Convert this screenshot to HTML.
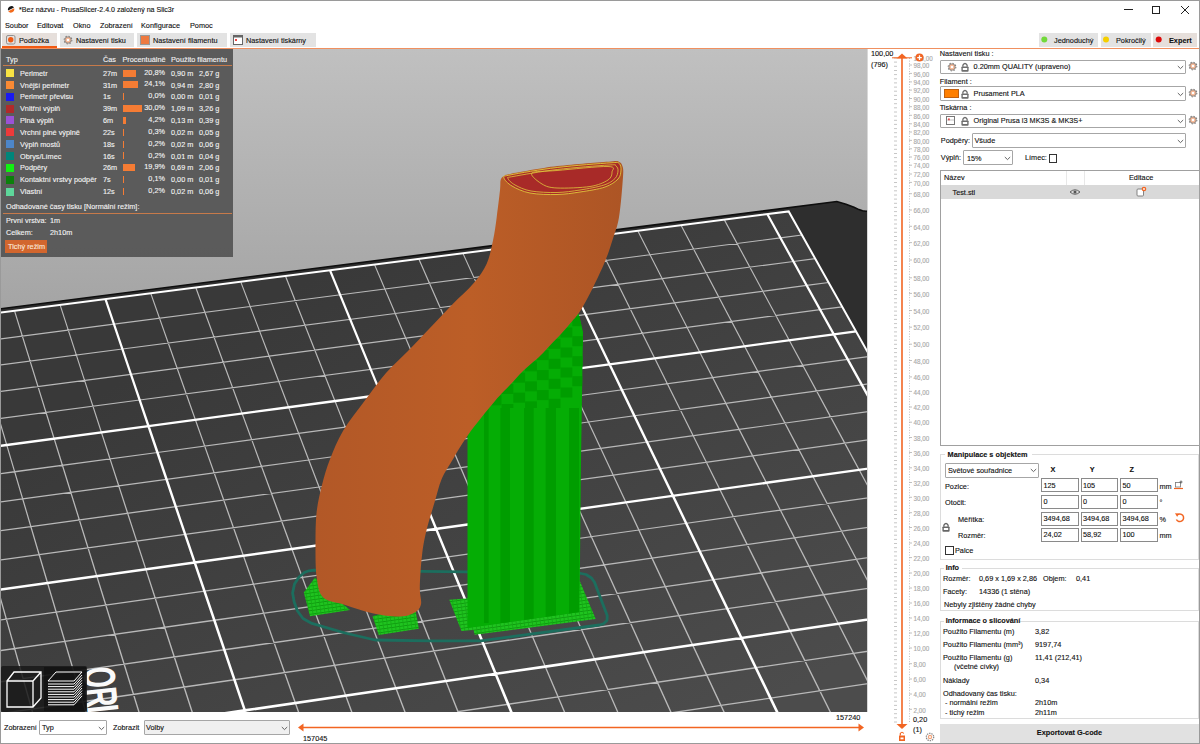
<!DOCTYPE html><html><head><meta charset="utf-8"><title>PrusaSlicer</title><style>
*{margin:0;padding:0;box-sizing:border-box}
html,body{width:1200px;height:744px;overflow:hidden;background:#fff;font-family:"Liberation Sans",sans-serif}
.t{position:absolute;white-space:nowrap;line-height:1.2;-webkit-text-stroke:0.12px currentColor}
.b{position:absolute}
svg{position:absolute}
</style></head><body>
<div class="b" style="left:0px;top:0px;width:1200px;height:744px;background:#fff;border:1px solid #9a9a9a;"></div>
<svg style="left:7px;top:5px" width="8" height="9" viewBox="0 0 8 9"><path d="M1,5.6 A3.4,3.6 0 0 1 7,2.6 Z" fill="#161616"/><path d="M1.2,6.2 L7.2,3.2 A3.4,3.6 0 0 1 1.2,6.2 Z" fill="#f26a1b"/></svg>
<div class="t " style="left:19px;top:6.3px;font-size:7.05px;color:#111;font-weight:400;">*Bez názvu - PrusaSlicer-2.4.0 založený na Slic3r</div>
<div class="b" style="left:1124px;top:9px;width:9px;height:1px;background:#222;"></div>
<div class="b" style="left:1152px;top:6px;width:8px;height:8px;background:none;border:1px solid #222;"></div>
<svg style="left:1180px;top:5px" width="10" height="10"><path d="M1,1 L9,9 M9,1 L1,9" stroke="#222" stroke-width="1"/></svg>
<div class="t " style="left:5px;top:22.1px;font-size:7.3px;color:#111;font-weight:400;">Soubor</div>
<div class="t " style="left:37px;top:22.1px;font-size:7.3px;color:#111;font-weight:400;">Editovat</div>
<div class="t " style="left:73px;top:22.1px;font-size:7.3px;color:#111;font-weight:400;">Okno</div>
<div class="t " style="left:100px;top:22.1px;font-size:7.3px;color:#111;font-weight:400;">Zobrazení</div>
<div class="t " style="left:141px;top:22.1px;font-size:7.3px;color:#111;font-weight:400;">Konfigurace</div>
<div class="t " style="left:190px;top:22.1px;font-size:7.3px;color:#111;font-weight:400;">Pomoc</div>
<div class="b" style="left:2px;top:33px;width:55px;height:13px;background:#e6dfdb;"></div>
<div class="b" style="left:2px;top:46px;width:55px;height:2px;background:#f25a12;"></div>
<div class="b" style="left:60px;top:33px;width:74px;height:14px;background:#e3e3e3;"></div>
<div class="b" style="left:137px;top:33px;width:90px;height:14px;background:#e3e3e3;"></div>
<div class="b" style="left:230px;top:33px;width:86px;height:14px;background:#e3e3e3;"></div>
<div class="b" style="left:1px;top:48px;width:1198px;height:1px;background:#f09060;"></div>
<svg style="left:6px;top:35px" width="10" height="10"><rect x="0.5" y="0.5" width="8.5" height="8.5" rx="1.5" fill="none" stroke="#888" stroke-width="0.9"/><circle cx="4.75" cy="4.75" r="2.7" fill="#f05a14"/></svg>
<div class="t " style="left:19px;top:36.6px;font-size:7.3px;color:#111;font-weight:400;">Podložka</div>
<svg style="left:63px;top:35px" width="10" height="10"><circle cx="5" cy="5" r="3.85" fill="none" stroke="#808080" stroke-width="1.1" stroke-dasharray="1.4 1.62"/><circle cx="5" cy="5" r="3.2" fill="#f4b592" stroke="#808080" stroke-width="0.8"/><circle cx="5" cy="5" r="1.3" fill="#fff"/></svg>
<div class="t " style="left:76px;top:36.6px;font-size:7.3px;color:#111;font-weight:400;">Nastavení tisku</div>
<svg style="left:140px;top:35px" width="10" height="10"><rect x="0.5" y="0.5" width="9" height="9" fill="#ee7a40" stroke="#999"/></svg>
<div class="t " style="left:153px;top:36.6px;font-size:7.3px;color:#111;font-weight:400;">Nastavení filamentu</div>
<svg style="left:233px;top:35px" width="10" height="10"><rect x="0.5" y="0.5" width="9" height="9" fill="#fff" stroke="#666"/><rect x="0.5" y="0.5" width="9" height="2" fill="#666"/><rect x="2" y="4" width="2" height="2" fill="#e44"/></svg>
<div class="t " style="left:246px;top:36.6px;font-size:7.3px;color:#111;font-weight:400;">Nastavení tiskárny</div>
<div class="b" style="left:1039px;top:33px;width:59px;height:14px;background:#e3e3e3;"></div>
<div class="b" style="left:1101px;top:33px;width:50px;height:14px;background:#e3e3e3;"></div>
<div class="b" style="left:1153px;top:33px;width:44px;height:14px;background:#e6dfdb;"></div>
<svg style="left:1040px;top:35px" width="160" height="10"><circle cx="4.3" cy="4.6" r="3" fill="#72d93a"/><circle cx="66" cy="4.6" r="3" fill="#f5cf00"/><circle cx="118.7" cy="4.6" r="3" fill="#dd0a0a"/></svg>
<div class="t " style="left:1054px;top:36.6px;font-size:7.3px;color:#111;font-weight:400;">Jednoduchý</div>
<div class="t " style="left:1116px;top:36.6px;font-size:7.3px;color:#111;font-weight:400;">Pokročilý</div>
<div class="t " style="left:1169px;top:36.6px;font-size:7.3px;color:#111;font-weight:700;">Expert</div>
<svg width="867" height="663" viewBox="1 49 867 663" style="position:absolute;left:1px;top:49px">
<defs><linearGradient id="bg" x1="0" y1="0" x2="0" y2="1"><stop offset="0" stop-color="#c0c0c0"/><stop offset="1" stop-color="#7a7a7a"/></linearGradient>
<linearGradient id="bedg" gradientUnits="userSpaceOnUse" x1="420" y1="220" x2="700" y2="740"><stop offset="0" stop-color="#393939"/><stop offset="1" stop-color="#4c4c4c"/></linearGradient>
<linearGradient id="org" x1="0" y1="0" x2="1" y2="0"><stop offset="0" stop-color="#b25827"/><stop offset="0.5" stop-color="#bc5e27"/><stop offset="1" stop-color="#ad5525"/></linearGradient>
</defs>
<rect x="1" y="49" width="867" height="663" fill="url(#bg)"/>
<path d="M-286.0,1357.2 L-451.1,366.7 L836.8,201.5 L846.0,204.3 L854.0,207.2 L859.0,209.6 L862.5,210.8 L866.0,211.2 L869.0,211.0 L869.0,720.0Z" fill="#2e2e2e" stroke="#0e0e0e" stroke-width="1.6"/>
<path d="M-450.4,371.1 L789.0,211.8 L1283.2,1093.2 L-286.0,1357.2Z" fill="url(#bedg)"/>
<path fill="#b9b9b9" d="M-451.0,371.2 L-438.0,449.2 L-436.8,449.0 L-449.8,371.0Z M-438.0,449.2 L-424.4,531.0 L-423.1,530.8 L-436.8,449.0Z M-424.4,531.0 L-410.1,616.7 L-408.8,616.5 L-423.1,530.8Z M-410.1,616.7 L-395.1,706.7 L-393.8,706.5 L-408.8,616.5Z M-395.1,706.7 L-379.4,801.3 L-378.0,801.1 L-393.8,706.5Z M-379.4,801.3 L-362.8,900.9 L-361.4,900.7 L-378.0,801.1Z M-362.8,900.9 L-345.4,1005.8 L-343.9,1005.6 L-361.4,900.7Z M-345.4,1005.8 L-326.9,1116.5 L-325.4,1116.2 L-343.9,1005.6Z M-326.9,1116.5 L-307.5,1233.5 L-305.8,1233.2 L-325.4,1116.2Z M-307.5,1233.5 L-286.9,1357.3 L-285.2,1357.1 L-305.8,1233.2Z M-403.7,365.1 L-389.6,442.9 L-388.4,442.7 L-402.5,364.9Z M-389.6,442.9 L-374.9,524.3 L-373.7,524.1 L-388.4,442.7Z M-374.9,524.3 L-359.5,609.7 L-358.2,609.5 L-373.7,524.1Z M-359.5,609.7 L-343.3,699.4 L-341.9,699.1 L-358.2,609.5Z M-343.3,699.4 L-326.2,793.6 L-324.8,793.4 L-341.9,699.1Z M-326.2,793.6 L-308.3,892.7 L-306.9,892.5 L-324.8,793.4Z M-308.3,892.7 L-289.4,997.2 L-287.9,996.9 L-306.9,892.5Z M-289.4,997.2 L-269.5,1107.4 L-268.0,1107.1 L-287.9,996.9Z M-269.5,1107.4 L-248.5,1223.9 L-246.8,1223.6 L-268.0,1107.1Z M-248.5,1223.9 L-226.2,1347.1 L-224.5,1346.8 L-246.8,1223.6Z M-309.6,353.0 L-293.5,430.2 L-292.3,430.0 L-308.5,352.8Z M-293.5,430.2 L-276.5,511.1 L-275.3,510.8 L-292.3,430.0Z M-276.5,511.1 L-258.8,595.8 L-257.5,595.6 L-275.3,510.8Z M-258.8,595.8 L-240.2,684.8 L-238.8,684.5 L-257.5,595.6Z M-240.2,684.8 L-220.6,778.2 L-219.2,777.9 L-238.8,684.5Z M-220.6,778.2 L-200.0,876.5 L-198.6,876.2 L-219.2,777.9Z M-200.0,876.5 L-178.3,980.1 L-176.8,979.8 L-198.6,876.2Z M-178.3,980.1 L-155.4,1089.4 L-153.9,1089.0 L-176.8,979.8Z M-155.4,1089.4 L-131.3,1204.8 L-129.6,1204.4 L-153.9,1089.0Z M-131.3,1204.8 L-105.7,1326.9 L-104.0,1326.5 L-129.6,1204.4Z M-262.9,347.0 L-245.7,423.9 L-244.5,423.7 L-261.7,346.8Z M-245.7,423.9 L-227.6,504.5 L-226.4,504.2 L-244.5,423.7Z M-227.6,504.5 L-208.7,588.9 L-207.5,588.6 L-226.4,504.2Z M-208.7,588.9 L-188.9,677.5 L-187.6,677.2 L-207.5,588.6Z M-188.9,677.5 L-168.1,770.6 L-166.7,770.3 L-187.6,677.2Z M-168.1,770.6 L-146.2,868.5 L-144.8,868.2 L-166.7,770.3Z M-146.2,868.5 L-123.1,971.6 L-121.6,971.3 L-144.8,868.2Z M-123.1,971.6 L-98.8,1080.4 L-97.2,1080.0 L-121.6,971.3Z M-98.8,1080.4 L-73.1,1195.3 L-71.5,1194.9 L-97.2,1080.0Z M-73.1,1195.3 L-45.9,1316.8 L-44.2,1316.5 L-71.5,1194.9Z M-216.3,341.0 L-198.0,417.7 L-196.9,417.4 L-215.2,340.8Z M-198.0,417.7 L-178.9,497.9 L-177.7,497.6 L-196.9,417.4Z M-178.9,497.9 L-158.9,582.0 L-157.6,581.7 L-177.7,497.6Z M-158.9,582.0 L-137.9,670.3 L-136.6,670.0 L-157.6,581.7Z M-137.9,670.3 L-115.8,763.0 L-114.5,762.7 L-136.6,670.0Z M-115.8,763.0 L-92.6,860.5 L-91.2,860.1 L-114.5,762.7Z M-92.6,860.5 L-68.1,963.2 L-66.7,962.8 L-91.2,860.1Z M-68.1,963.2 L-42.4,1071.5 L-40.8,1071.1 L-66.7,962.8Z M-42.4,1071.5 L-15.1,1185.8 L-13.5,1185.5 L-40.8,1071.1Z M-15.1,1185.8 L13.7,1306.8 L15.3,1306.4 L-13.5,1185.5Z M-169.9,335.1 L-150.6,411.5 L-149.4,411.2 L-168.7,334.8Z M-150.6,411.5 L-130.4,491.4 L-129.2,491.1 L-149.4,411.2Z M-130.4,491.4 L-109.2,575.2 L-108.0,574.9 L-129.2,491.1Z M-109.2,575.2 L-87.1,663.1 L-85.8,662.7 L-108.0,574.9Z M-87.1,663.1 L-63.8,755.4 L-62.4,755.1 L-85.8,662.7Z M-63.8,755.4 L-39.2,852.5 L-37.8,852.1 L-62.4,755.1Z M-39.2,852.5 L-13.4,954.7 L-12.0,954.4 L-37.8,852.1Z M-13.4,954.7 L13.8,1062.6 L15.3,1062.2 L-12.0,954.4Z M13.8,1062.6 L42.5,1176.4 L44.1,1176.0 L15.3,1062.2Z M42.5,1176.4 L72.9,1296.9 L74.6,1296.5 L44.1,1176.0Z M-77.5,323.2 L-56.2,399.0 L-55.1,398.7 L-76.4,322.9Z M-56.2,399.0 L-33.9,478.4 L-32.7,478.1 L-55.1,398.7Z M-33.9,478.4 L-10.5,561.5 L-9.3,561.2 L-32.7,478.1Z M-10.5,561.5 L14.0,648.7 L15.3,648.4 L-9.3,561.2Z M14.0,648.7 L39.7,740.3 L41.1,740.0 L15.3,648.4Z M39.7,740.3 L66.8,836.6 L68.2,836.2 L41.1,740.0Z M66.8,836.6 L95.3,938.0 L96.7,937.6 L68.2,836.2Z M95.3,938.0 L125.4,1044.9 L126.8,1044.5 L96.7,937.6Z M125.4,1044.9 L157.1,1157.8 L158.6,1157.3 L126.8,1044.5Z M157.1,1157.8 L190.6,1277.1 L192.2,1276.6 L158.6,1157.3Z M-31.6,317.3 L-9.3,392.9 L-8.2,392.5 L-30.5,317.0Z M-9.3,392.9 L14.1,471.9 L15.2,471.6 L-8.2,392.5Z M14.1,471.9 L38.5,554.8 L39.8,554.4 L15.2,471.6Z M38.5,554.8 L64.2,641.6 L65.5,641.3 L39.8,554.4Z M64.2,641.6 L91.1,732.8 L92.5,732.5 L65.5,641.3Z M91.1,732.8 L119.5,828.8 L120.9,828.3 L92.5,732.5Z M119.5,828.8 L149.3,929.7 L150.7,929.3 L120.9,828.3Z M149.3,929.7 L180.8,1036.1 L182.2,1035.7 L150.7,929.3Z M180.8,1036.1 L214.0,1148.5 L215.5,1148.0 L182.2,1035.7Z M214.0,1148.5 L249.0,1267.3 L250.7,1266.8 L215.5,1148.0Z M14.1,311.5 L37.4,386.7 L38.6,386.4 L15.2,311.1Z M37.4,386.7 L61.8,465.5 L63.0,465.1 L38.6,386.4Z M61.8,465.5 L87.4,548.0 L88.6,547.6 L63.0,465.1Z M87.4,548.0 L114.2,634.5 L115.5,634.1 L88.6,547.6Z M114.2,634.5 L142.4,725.4 L143.7,725.0 L115.5,634.1Z M142.4,725.4 L171.9,820.9 L173.3,820.5 L143.7,725.0Z M171.9,820.9 L203.1,921.4 L204.5,921.0 L173.3,820.5Z M203.1,921.4 L235.9,1027.4 L237.4,1027.0 L204.5,921.0Z M235.9,1027.4 L270.6,1139.3 L272.1,1138.8 L237.4,1027.0Z M270.6,1139.3 L307.2,1257.5 L308.8,1257.0 L272.1,1138.8Z M59.7,305.6 L84.0,380.6 L85.1,380.3 L60.8,305.3Z M84.0,380.6 L109.4,459.1 L110.6,458.7 L85.1,380.3Z M109.4,459.1 L136.1,541.3 L137.3,540.9 L110.6,458.7Z M136.1,541.3 L164.0,627.5 L165.3,627.1 L137.3,540.9Z M164.0,627.5 L193.4,718.0 L194.7,717.5 L165.3,627.1Z M193.4,718.0 L224.2,813.1 L225.5,812.7 L194.7,717.5Z M224.2,813.1 L256.6,913.2 L258.0,912.8 L225.5,812.7Z M256.6,913.2 L290.8,1018.7 L292.3,1018.2 L258.0,912.8Z M290.8,1018.7 L326.9,1130.1 L328.5,1129.6 L292.3,1018.2Z M326.9,1130.1 L365.1,1247.8 L366.7,1247.3 L328.5,1129.6Z M150.4,294.0 L176.6,368.4 L177.7,368.0 L151.4,293.6Z M176.6,368.4 L204.1,446.3 L205.3,445.9 L177.7,368.0Z M204.1,446.3 L232.9,527.9 L234.1,527.5 L205.3,445.9Z M232.9,527.9 L263.1,613.4 L264.3,613.0 L234.1,527.5Z M263.1,613.4 L294.7,703.2 L296.0,702.8 L264.3,613.0Z M294.7,703.2 L328.0,797.6 L329.4,797.1 L296.0,702.8Z M328.0,797.6 L363.0,896.8 L364.4,896.4 L329.4,797.1Z M363.0,896.8 L399.9,1001.5 L401.4,1000.9 L364.4,896.4Z M399.9,1001.5 L438.9,1111.8 L440.4,1111.3 L401.4,1000.9Z M438.9,1111.8 L480.0,1228.5 L481.6,1227.9 L440.4,1111.3Z M195.4,288.2 L222.7,362.4 L223.8,362.0 L196.5,287.8Z M222.7,362.4 L251.2,440.0 L252.3,439.6 L223.8,362.0Z M251.2,440.0 L281.0,521.3 L282.2,520.8 L252.3,439.6Z M281.0,521.3 L312.3,606.5 L313.5,606.0 L282.2,520.8Z M312.3,606.5 L345.1,695.9 L346.4,695.4 L313.5,606.0Z M345.1,695.9 L379.6,789.8 L380.9,789.4 L346.4,695.4Z M379.6,789.8 L415.9,888.7 L417.3,888.2 L380.9,789.4Z M415.9,888.7 L454.1,992.9 L455.6,992.3 L417.3,888.2Z M454.1,992.9 L494.5,1102.8 L496.0,1102.2 L455.6,992.3Z M494.5,1102.8 L537.1,1218.9 L538.7,1218.3 L496.0,1102.2Z M240.4,282.4 L268.6,356.4 L269.7,355.9 L241.4,282.0Z M268.6,356.4 L298.1,433.7 L299.2,433.2 L269.7,355.9Z M298.1,433.7 L328.9,514.6 L330.1,514.2 L299.2,433.2Z M328.9,514.6 L361.3,599.5 L362.5,599.0 L330.1,514.2Z M361.3,599.5 L395.3,688.6 L396.6,688.1 L362.5,599.0Z M395.3,688.6 L431.0,782.2 L432.3,781.7 L396.6,688.1Z M431.0,782.2 L468.5,880.6 L469.9,880.1 L432.3,781.7Z M468.5,880.6 L508.1,984.3 L509.5,983.8 L469.9,880.1Z M508.1,984.3 L549.8,1093.7 L551.3,1093.2 L509.5,983.8Z M549.8,1093.7 L593.9,1209.3 L595.5,1208.7 L551.3,1093.2Z M285.1,276.7 L314.3,350.4 L315.4,349.9 L286.2,276.3Z M314.3,350.4 L344.8,427.4 L345.9,426.9 L315.4,349.9Z M344.8,427.4 L376.7,508.0 L377.9,507.6 L345.9,426.9Z M376.7,508.0 L410.1,592.6 L411.4,592.1 L377.9,507.6Z M410.1,592.6 L445.2,681.3 L446.5,680.8 L411.4,592.1Z M445.2,681.3 L482.1,774.5 L483.4,774.0 L446.5,680.8Z M482.1,774.5 L520.9,872.6 L522.3,872.0 L483.4,774.0Z M520.9,872.6 L561.8,975.8 L563.2,975.3 L522.3,872.0Z M561.8,975.8 L604.9,1084.8 L606.4,1084.2 L563.2,975.3Z M604.9,1084.8 L650.5,1199.8 L652.0,1199.2 L606.4,1084.2Z M374.2,265.3 L405.2,338.4 L406.3,337.9 L375.2,264.8Z M405.2,338.4 L437.6,414.9 L438.8,414.4 L406.3,337.9Z M437.6,414.9 L471.6,494.9 L472.8,494.4 L438.8,414.4Z M471.6,494.9 L507.2,578.8 L508.4,578.3 L472.8,494.4Z M507.2,578.8 L544.6,666.8 L545.8,666.3 L508.4,578.3Z M544.6,666.8 L583.8,759.3 L585.1,758.7 L545.8,666.3Z M583.8,759.3 L625.1,856.5 L626.4,856.0 L585.1,758.7Z M625.1,856.5 L668.5,958.9 L669.9,958.3 L626.4,856.0Z M668.5,958.9 L714.4,1066.9 L715.8,1066.3 L669.9,958.3Z M714.4,1066.9 L762.8,1181.0 L764.3,1180.3 L715.8,1066.3Z M418.4,259.6 L450.4,332.5 L451.5,332.0 L419.5,259.1Z M450.4,332.5 L483.8,408.6 L484.9,408.2 L451.5,332.0Z M483.8,408.6 L518.8,488.4 L520.0,487.9 L484.9,408.2Z M518.8,488.4 L555.5,572.0 L556.7,571.4 L520.0,487.9Z M555.5,572.0 L594.0,659.6 L595.2,659.1 L556.7,571.4Z M594.0,659.6 L634.4,751.7 L635.6,751.2 L595.2,659.1Z M634.4,751.7 L676.8,848.6 L678.2,848.0 L635.6,751.2Z M676.8,848.6 L721.6,950.5 L723.0,949.9 L678.2,848.0Z M721.6,950.5 L768.7,1058.1 L770.2,1057.4 L723.0,949.9Z M768.7,1058.1 L818.5,1171.6 L820.1,1170.9 L770.2,1057.4Z M462.6,253.9 L495.4,326.5 L496.5,326.0 L463.6,253.5Z M495.4,326.5 L529.8,402.4 L530.9,401.9 L496.5,326.0Z M529.8,402.4 L565.8,481.9 L567.0,481.4 L530.9,401.9Z M565.8,481.9 L603.6,565.2 L604.7,564.6 L567.0,481.4Z M603.6,565.2 L643.1,652.5 L644.4,651.9 L604.7,564.6Z M643.1,652.5 L684.7,744.2 L685.9,743.6 L644.4,651.9Z M684.7,744.2 L728.4,840.6 L729.7,840.0 L685.9,743.6Z M728.4,840.6 L774.4,942.2 L775.7,941.6 L729.7,840.0Z M774.4,942.2 L822.9,1049.2 L824.3,1048.6 L775.7,941.6Z M822.9,1049.2 L874.1,1162.3 L875.6,1161.6 L824.3,1048.6Z M506.5,248.3 L540.3,320.6 L541.4,320.1 L507.5,247.8Z M540.3,320.6 L575.7,396.3 L576.8,395.8 L541.4,320.1Z M575.7,396.3 L612.7,475.4 L613.8,474.9 L576.8,395.8Z M612.7,475.4 L651.4,558.4 L652.6,557.8 L613.8,474.9Z M651.4,558.4 L692.1,645.4 L693.3,644.8 L652.6,557.8Z M692.1,645.4 L734.8,736.7 L736.1,736.1 L693.3,644.8Z M734.8,736.7 L779.7,832.8 L781.0,832.1 L736.1,736.1Z M779.7,832.8 L826.9,933.9 L828.3,933.2 L781.0,832.1Z M826.9,933.9 L876.7,1040.4 L878.2,1039.8 L828.3,933.2Z M876.7,1040.4 L929.3,1153.0 L930.8,1152.3 L878.2,1039.8Z M594.0,237.1 L629.6,308.9 L630.7,308.4 L595.0,236.6Z M629.6,308.9 L666.8,384.0 L667.9,383.4 L630.7,308.4Z M666.8,384.0 L705.8,462.6 L706.9,462.0 L667.9,383.4Z M705.8,462.6 L746.6,544.9 L747.8,544.3 L706.9,462.0Z M746.6,544.9 L789.4,631.2 L790.7,630.6 L747.8,544.3Z M789.4,631.2 L834.4,721.8 L835.6,721.2 L790.7,630.6Z M834.4,721.8 L881.6,817.1 L882.9,816.4 L835.6,721.2Z M881.6,817.1 L931.4,917.3 L932.7,916.7 L882.9,816.4Z M931.4,917.3 L983.8,1023.0 L985.2,1022.3 L932.7,916.7Z M983.8,1023.0 L1039.1,1134.5 L1040.6,1133.8 L985.2,1022.3Z M637.5,231.5 L674.0,303.1 L675.0,302.5 L638.5,231.0Z M674.0,303.1 L712.2,377.9 L713.2,377.3 L675.0,302.5Z M712.2,377.9 L752.1,456.2 L753.2,455.6 L713.2,377.3Z M752.1,456.2 L794.0,538.2 L795.1,537.6 L753.2,455.6Z M794.0,538.2 L837.8,624.1 L839.0,623.5 L795.1,537.6Z M837.8,624.1 L883.9,714.4 L885.1,713.8 L839.0,623.5Z M883.9,714.4 L932.3,809.3 L933.6,808.6 L885.1,713.8Z M932.3,809.3 L983.3,909.1 L984.6,908.4 L933.6,808.6Z M983.3,909.1 L1036.9,1014.3 L1038.3,1013.6 L984.6,908.4Z M1036.9,1014.3 L1093.6,1125.4 L1095.1,1124.6 L1038.3,1013.6Z M680.8,225.9 L718.2,297.2 L719.3,296.7 L681.8,225.4Z M718.2,297.2 L757.3,371.8 L758.4,371.2 L719.3,296.7Z M757.3,371.8 L798.2,449.8 L799.4,449.2 L758.4,371.2Z M798.2,449.8 L841.1,531.5 L842.2,530.9 L799.4,449.2Z M841.1,531.5 L886.0,617.1 L887.2,616.5 L842.2,530.9Z M886.0,617.1 L933.2,707.0 L934.4,706.4 L887.2,616.5Z M933.2,707.0 L982.8,801.5 L984.0,800.8 L934.4,706.4Z M982.8,801.5 L1034.9,900.9 L1036.2,900.2 L984.0,800.8Z M1034.9,900.9 L1089.9,1005.7 L1091.3,1005.0 L1036.2,900.2Z M1089.9,1005.7 L1147.9,1116.2 L1149.3,1115.5 L1091.3,1005.0Z M724.0,220.4 L762.3,291.5 L763.3,290.9 L725.0,219.8Z M762.3,291.5 L802.3,365.7 L803.4,365.2 L763.3,290.9Z M802.3,365.7 L844.2,443.4 L845.3,442.8 L803.4,365.2Z M844.2,443.4 L888.1,524.8 L889.2,524.2 L845.3,442.8Z M888.1,524.8 L934.0,610.1 L935.2,609.5 L889.2,524.2Z M934.0,610.1 L982.3,699.7 L983.5,699.0 L935.2,609.5Z M982.3,699.7 L1033.0,793.8 L1034.3,793.1 L983.5,699.0Z M1033.0,793.8 L1086.4,892.8 L1087.7,892.1 L1034.3,793.1Z M1086.4,892.8 L1142.6,997.1 L1143.9,996.4 L1087.7,892.1Z M1142.6,997.1 L1201.9,1107.2 L1203.3,1106.4 L1143.9,996.4Z M-446.0,397.3 L-303.7,378.8 L-303.8,377.7 L-446.2,396.1Z M-303.7,378.8 L-162.9,360.6 L-163.0,359.4 L-303.8,377.7Z M-162.9,360.6 L-23.7,342.6 L-23.8,341.4 L-163.0,359.4Z M-23.7,342.6 L114.0,324.7 L113.9,323.6 L-23.8,341.4Z M114.0,324.7 L250.2,307.1 L250.1,305.9 L113.9,323.6Z M250.2,307.1 L385.0,289.6 L384.8,288.5 L250.1,305.9Z M385.0,289.6 L518.2,272.4 L518.1,271.2 L384.8,288.5Z M518.2,272.4 L650.0,255.3 L649.9,254.2 L518.1,271.2Z M650.0,255.3 L780.5,238.4 L780.3,237.3 L649.9,254.2Z M780.5,238.4 L802.1,235.6 L801.9,234.5 L780.3,237.3Z M-441.7,423.3 L-298.3,404.6 L-298.4,403.4 L-441.9,422.1Z M-298.3,404.6 L-156.5,386.1 L-156.6,384.9 L-298.4,403.4Z M-156.5,386.1 L-16.2,367.7 L-16.4,366.6 L-156.6,384.9Z M-16.2,367.7 L122.5,349.6 L122.3,348.5 L-16.4,366.6Z M122.5,349.6 L259.6,331.7 L259.5,330.6 L122.3,348.5Z M259.6,331.7 L395.3,314.0 L395.2,312.9 L259.5,330.6Z M395.3,314.0 L529.5,296.5 L529.3,295.3 L395.2,312.9Z M529.5,296.5 L662.2,279.2 L662.1,278.0 L529.3,295.3Z M662.2,279.2 L793.5,262.0 L793.4,260.9 L662.1,278.0Z M793.5,262.0 L815.3,259.2 L815.1,258.0 L793.4,260.9Z M-437.3,449.7 L-292.8,430.7 L-293.0,429.5 L-437.5,448.5Z M-292.8,430.7 L-149.9,411.9 L-150.1,410.7 L-293.0,429.5Z M-149.9,411.9 L-8.7,393.3 L-8.8,392.1 L-150.1,410.7Z M-8.7,393.3 L131.0,374.9 L130.9,373.7 L-8.8,392.1Z M131.0,374.9 L269.2,356.7 L269.0,355.6 L130.9,373.7Z M269.2,356.7 L405.8,338.8 L405.7,337.6 L269.0,355.6Z M405.8,338.8 L540.9,321.0 L540.8,319.8 L405.7,337.6Z M540.9,321.0 L674.6,303.4 L674.4,302.2 L540.8,319.8Z M674.6,303.4 L806.8,286.0 L806.6,284.8 L674.4,302.2Z M806.8,286.0 L828.7,283.1 L828.5,281.9 L806.6,284.8Z M-432.8,476.6 L-287.2,457.2 L-287.4,456.0 L-433.0,475.3Z M-287.2,457.2 L-143.3,438.1 L-143.4,436.9 L-287.4,456.0Z M-143.3,438.1 L-1.0,419.3 L-1.1,418.1 L-143.4,436.9Z M-1.0,419.3 L139.7,400.6 L139.6,399.4 L-1.1,418.1Z M139.7,400.6 L278.9,382.1 L278.7,380.9 L139.6,399.4Z M278.9,382.1 L416.5,363.9 L416.3,362.7 L278.7,380.9Z M416.5,363.9 L552.6,345.8 L552.4,344.6 L416.3,362.7Z M552.6,345.8 L687.1,327.9 L687.0,326.8 L552.4,344.6Z M687.1,327.9 L820.2,310.3 L820.1,309.1 L687.0,326.8Z M820.2,310.3 L842.3,307.4 L842.1,306.2 L820.1,309.1Z M-423.7,531.5 L-275.8,511.6 L-276.0,510.3 L-423.8,530.3Z M-275.8,511.6 L-129.7,491.9 L-129.9,490.6 L-276.0,510.3Z M-129.7,491.9 L14.7,472.4 L14.6,471.1 L-129.9,490.6Z M14.7,472.4 L157.5,453.1 L157.4,451.9 L14.6,471.1Z M157.5,453.1 L298.7,434.1 L298.5,432.8 L157.4,451.9Z M298.7,434.1 L438.3,415.2 L438.1,414.0 L298.5,432.8Z M438.3,415.2 L576.3,396.6 L576.1,395.4 L438.1,414.0Z M576.3,396.6 L712.8,378.2 L712.6,377.0 L576.1,395.4Z M712.8,378.2 L847.8,360.0 L847.6,358.8 L712.6,377.0Z M847.8,360.0 L870.1,357.0 L869.9,355.8 L847.6,358.8Z M-419.0,559.6 L-270.0,539.4 L-270.2,538.1 L-419.1,558.4Z M-270.0,539.4 L-122.8,519.4 L-122.9,518.1 L-270.2,538.1Z M-122.8,519.4 L22.8,499.6 L22.6,498.3 L-122.9,518.1Z M22.8,499.6 L166.6,480.0 L166.5,478.8 L22.6,498.3Z M166.6,480.0 L308.8,460.6 L308.7,459.4 L166.5,478.8Z M308.8,460.6 L449.4,441.5 L449.3,440.3 L308.7,459.4Z M449.4,441.5 L588.5,422.6 L588.3,421.4 L449.3,440.3Z M588.5,422.6 L725.9,403.9 L725.7,402.7 L588.3,421.4Z M725.9,403.9 L861.8,385.4 L861.7,384.2 L725.7,402.7Z M861.8,385.4 L884.3,382.4 L884.2,381.1 L861.7,384.2Z M-414.2,588.2 L-264.1,567.6 L-264.3,566.4 L-414.4,587.0Z M-264.1,567.6 L-115.7,547.3 L-115.9,546.0 L-264.3,566.4Z M-115.7,547.3 L30.9,527.2 L30.8,525.9 L-115.9,546.0Z M30.9,527.2 L175.9,507.3 L175.7,506.0 L30.8,525.9Z M175.9,507.3 L319.1,487.6 L319.0,486.4 L175.7,506.0Z M319.1,487.6 L460.8,468.2 L460.6,467.0 L319.0,486.4Z M460.8,468.2 L600.8,449.0 L600.6,447.8 L460.6,467.0Z M600.8,449.0 L739.2,430.0 L739.1,428.8 L600.6,447.8Z M739.2,430.0 L876.1,411.2 L875.9,410.0 L739.1,428.8Z M876.1,411.2 L898.8,408.1 L898.6,406.9 L875.9,410.0Z M-409.4,617.3 L-258.1,596.3 L-258.2,595.1 L-409.5,616.0Z M-258.1,596.3 L-108.5,575.7 L-108.7,574.4 L-258.2,595.1Z M-108.5,575.7 L39.2,555.2 L39.1,553.9 L-108.7,574.4Z M39.2,555.2 L185.3,535.0 L185.1,533.7 L39.1,553.9Z M185.3,535.0 L329.6,515.0 L329.4,513.8 L185.1,533.7Z M329.6,515.0 L472.3,495.3 L472.1,494.0 L329.4,513.8Z M472.3,495.3 L613.3,475.8 L613.2,474.5 L472.1,494.0Z M613.3,475.8 L752.8,456.5 L752.6,455.3 L613.2,474.5Z M752.8,456.5 L890.6,437.4 L890.4,436.2 L752.6,455.3Z M890.6,437.4 L913.4,434.3 L913.3,433.0 L890.4,436.2Z M-399.4,676.8 L-245.7,655.2 L-245.9,653.8 L-399.6,675.5Z M-245.7,655.2 L-93.8,633.8 L-94.0,632.5 L-245.9,653.8Z M-93.8,633.8 L56.2,612.7 L56.0,611.4 L-94.0,632.5Z M56.2,612.7 L204.5,591.8 L204.3,590.5 L56.0,611.4Z M204.5,591.8 L351.0,571.2 L350.9,569.9 L204.3,590.5Z M351.0,571.2 L495.9,550.8 L495.7,549.5 L350.9,569.9Z M495.9,550.8 L639.0,530.6 L638.8,529.4 L495.7,549.5Z M639.0,530.6 L780.5,510.7 L780.3,509.5 L638.8,529.4Z M780.5,510.7 L920.3,491.1 L920.1,489.8 L780.3,509.5Z M920.3,491.1 L943.4,487.8 L943.3,486.5 L920.1,489.8Z M-394.4,707.3 L-239.4,685.3 L-239.6,684.0 L-394.5,706.0Z M-239.4,685.3 L-86.3,663.6 L-86.5,662.2 L-239.6,684.0Z M-86.3,663.6 L64.9,642.1 L64.7,640.8 L-86.5,662.2Z M64.9,642.1 L214.4,620.9 L214.2,619.6 L64.7,640.8Z M214.4,620.9 L362.0,599.9 L361.8,598.6 L214.2,619.6Z M362.0,599.9 L507.9,579.2 L507.7,577.9 L361.8,598.6Z M507.9,579.2 L652.1,558.7 L651.9,557.4 L507.7,577.9Z M652.1,558.7 L794.6,538.5 L794.4,537.2 L651.9,557.4Z M794.6,538.5 L935.5,518.5 L935.3,517.2 L794.4,537.2Z M935.5,518.5 L958.8,515.2 L958.6,513.9 L935.3,517.2Z M-389.2,738.3 L-233.0,715.9 L-233.2,714.6 L-389.4,737.0Z M-233.0,715.9 L-78.7,693.8 L-78.9,692.5 L-233.2,714.6Z M-78.7,693.8 L73.8,672.0 L73.6,670.7 L-78.9,692.5Z M73.8,672.0 L224.4,650.4 L224.2,649.1 L73.6,670.7Z M224.4,650.4 L373.2,629.1 L373.0,627.8 L224.2,649.1Z M373.2,629.1 L520.2,608.1 L520.0,606.8 L373.0,627.8Z M520.2,608.1 L665.5,587.3 L665.3,586.0 L520.0,606.8Z M665.5,587.3 L809.0,566.7 L808.8,565.4 L665.3,586.0Z M809.0,566.7 L950.9,546.4 L950.7,545.1 L808.8,565.4Z M950.9,546.4 L974.4,543.0 L974.2,541.7 L950.7,545.1Z M-383.9,769.9 L-226.4,747.1 L-226.6,745.7 L-384.1,768.5Z M-226.4,747.1 L-70.9,724.6 L-71.1,723.3 L-226.6,745.7Z M-70.9,724.6 L82.8,702.4 L82.6,701.1 L-71.1,723.3Z M82.8,702.4 L234.5,680.5 L234.4,679.1 L82.6,701.1Z M234.5,680.5 L384.5,658.8 L384.3,657.5 L234.4,679.1Z M384.5,658.8 L532.6,637.4 L532.4,636.1 L384.3,657.5Z M532.6,637.4 L679.0,616.3 L678.8,614.9 L532.4,636.1Z M679.0,616.3 L823.7,595.4 L823.5,594.1 L678.8,614.9Z M823.7,595.4 L966.6,574.7 L966.4,573.4 L823.5,594.1Z M966.6,574.7 L990.3,571.3 L990.1,570.0 L966.4,573.4Z M-373.1,834.5 L-213.0,811.0 L-213.2,809.6 L-373.4,833.1Z M-213.0,811.0 L-54.9,787.7 L-55.1,786.3 L-213.2,809.6Z M-54.9,787.7 L101.2,764.8 L101.0,763.4 L-55.1,786.3Z M101.2,764.8 L255.4,742.1 L255.2,740.7 L101.0,763.4Z M255.4,742.1 L407.7,719.7 L407.5,718.3 L255.2,740.7Z M407.7,719.7 L558.2,697.6 L558.0,696.2 L407.5,718.3Z M558.2,697.6 L706.8,675.7 L706.6,674.3 L558.0,696.2Z M706.8,675.7 L853.6,654.1 L853.4,652.7 L706.6,674.3Z M853.6,654.1 L998.7,632.8 L998.5,631.4 L853.4,652.7Z M998.7,632.8 L1022.7,629.2 L1022.5,627.9 L998.5,631.4Z M-367.6,867.7 L-206.2,843.8 L-206.4,842.4 L-367.8,866.3Z M-206.2,843.8 L-46.8,820.1 L-47.0,818.7 L-206.4,842.4Z M-46.8,820.1 L110.7,796.7 L110.5,795.3 L-47.0,818.7Z M110.7,796.7 L266.1,773.7 L265.9,772.3 L110.5,795.3Z M266.1,773.7 L419.6,750.9 L419.4,749.5 L265.9,772.3Z M419.6,750.9 L571.3,728.4 L571.1,727.0 L419.4,749.5Z M571.3,728.4 L721.0,706.1 L720.8,704.8 L571.1,727.0Z M721.0,706.1 L869.0,684.2 L868.8,682.8 L720.8,704.8Z M869.0,684.2 L1015.2,662.5 L1015.0,661.1 L868.8,682.8Z M1015.2,662.5 L1039.4,658.9 L1039.2,657.5 L1015.0,661.1Z M-362.0,901.5 L-199.2,877.1 L-199.4,875.7 L-362.2,900.1Z M-199.2,877.1 L-38.4,853.0 L-38.6,851.6 L-199.4,875.7Z M-38.4,853.0 L120.3,829.3 L120.1,827.8 L-38.6,851.6Z M120.3,829.3 L277.0,805.8 L276.8,804.4 L120.1,827.8Z M277.0,805.8 L431.7,782.6 L431.5,781.2 L276.8,804.4Z M431.7,782.6 L584.6,759.7 L584.4,758.3 L431.5,781.2Z M584.6,759.7 L735.5,737.1 L735.3,735.7 L584.4,758.3Z M735.5,737.1 L884.6,714.8 L884.4,713.4 L735.3,735.7Z M884.6,714.8 L1031.9,692.7 L1031.7,691.3 L884.4,713.4Z M1031.9,692.7 L1056.3,689.1 L1056.1,687.7 L1031.7,691.3Z M-356.3,935.9 L-192.1,911.0 L-192.3,909.6 L-356.5,934.4Z M-192.1,911.0 L-30.0,886.5 L-30.2,885.1 L-192.3,909.6Z M-30.0,886.5 L130.1,862.3 L129.8,860.9 L-30.2,885.1Z M130.1,862.3 L288.1,838.5 L287.8,837.0 L129.8,860.9Z M288.1,838.5 L444.1,814.9 L443.8,813.5 L287.8,837.0Z M444.1,814.9 L598.1,791.6 L597.9,790.2 L443.8,813.5Z M598.1,791.6 L750.2,768.6 L750.0,767.2 L597.9,790.2Z M750.2,768.6 L900.5,745.9 L900.3,744.5 L750.0,767.2Z M900.5,745.9 L1048.9,723.4 L1048.7,722.0 L900.3,744.5Z M1048.9,723.4 L1073.5,719.7 L1073.3,718.3 L1048.7,722.0Z M-344.5,1006.4 L-177.4,980.7 L-177.7,979.2 L-344.7,1004.9Z M-177.4,980.7 L-12.6,955.3 L-12.8,953.8 L-177.7,979.2Z M-12.6,955.3 L150.1,930.2 L149.9,928.8 L-12.8,953.8Z M150.1,930.2 L310.8,905.5 L310.5,904.0 L149.9,928.8Z M310.8,905.5 L469.3,881.1 L469.1,879.6 L310.5,904.0Z M469.3,881.1 L625.9,857.0 L625.7,855.5 L469.1,879.6Z M625.9,857.0 L780.4,833.2 L780.2,831.7 L625.7,855.5Z M780.4,833.2 L933.1,809.7 L932.8,808.2 L780.2,831.7Z M933.1,809.7 L1083.8,786.4 L1083.6,785.0 L932.8,808.2Z M1083.8,786.4 L1108.7,782.6 L1108.5,781.2 L1083.6,785.0Z M-338.5,1042.7 L-169.9,1016.5 L-170.2,1015.0 L-338.7,1041.1Z M-169.9,1016.5 L-3.7,990.6 L-3.9,989.1 L-170.2,1015.0Z M-3.7,990.6 L160.4,965.1 L160.2,963.6 L-3.9,989.1Z M160.4,965.1 L322.4,939.9 L322.2,938.4 L160.2,963.6Z M322.4,939.9 L482.3,915.1 L482.1,913.6 L322.2,938.4Z M482.3,915.1 L640.1,890.5 L639.9,889.1 L482.1,913.6Z M640.1,890.5 L795.9,866.3 L795.7,864.8 L639.9,889.1Z M795.9,866.3 L949.8,842.4 L949.5,840.9 L795.7,864.8Z M949.8,842.4 L1101.7,818.8 L1101.4,817.3 L949.5,840.9Z M1101.7,818.8 L1126.8,814.8 L1126.6,813.4 L1101.4,817.3Z M-332.3,1079.6 L-162.3,1052.9 L-162.5,1051.4 L-332.5,1078.0Z M-162.3,1052.9 L5.4,1026.6 L5.2,1025.0 L-162.5,1051.4Z M5.4,1026.6 L170.9,1000.6 L170.7,999.1 L5.2,1025.0Z M170.9,1000.6 L334.3,974.9 L334.0,973.4 L170.7,999.1Z M334.3,974.9 L495.5,949.6 L495.3,948.1 L334.0,973.4Z M495.5,949.6 L654.6,924.6 L654.4,923.2 L495.3,948.1Z M654.6,924.6 L811.7,900.0 L811.5,898.5 L654.4,923.2Z M811.7,900.0 L966.8,875.6 L966.5,874.2 L811.5,898.5Z M966.8,875.6 L1119.8,851.6 L1119.6,850.2 L966.5,874.2Z M1119.8,851.6 L1145.2,847.6 L1144.9,846.2 L1119.6,850.2Z M-326.0,1117.2 L-154.5,1090.0 L-154.8,1088.4 L-326.3,1115.6Z M-154.5,1090.0 L14.7,1063.2 L14.4,1061.6 L-154.8,1088.4Z M14.7,1063.2 L181.6,1036.7 L181.4,1035.2 L14.4,1061.6Z M181.6,1036.7 L346.4,1010.6 L346.1,1009.1 L181.4,1035.2Z M346.4,1010.6 L508.9,984.8 L508.7,983.3 L346.1,1009.1Z M508.9,984.8 L669.4,959.4 L669.1,957.9 L508.7,983.3Z M669.4,959.4 L827.7,934.3 L827.5,932.8 L669.1,957.9Z M827.7,934.3 L984.0,909.5 L983.8,908.0 L827.5,932.8Z M984.0,909.5 L1138.4,885.1 L1138.1,883.6 L983.8,908.0Z M1138.4,885.1 L1163.9,881.0 L1163.6,879.5 L1138.1,883.6Z M-313.1,1194.4 L-138.5,1166.2 L-138.8,1164.6 L-313.4,1192.8Z M-138.5,1166.2 L33.7,1138.4 L33.4,1136.8 L-138.8,1164.6Z M33.7,1138.4 L203.6,1110.9 L203.3,1109.4 L33.4,1136.8Z M203.6,1110.9 L371.2,1083.8 L370.9,1082.3 L203.3,1109.4Z M371.2,1083.8 L536.5,1057.1 L536.3,1055.6 L370.9,1082.3Z M536.5,1057.1 L699.7,1030.7 L699.4,1029.2 L536.3,1055.6Z M699.7,1030.7 L860.7,1004.7 L860.4,1003.2 L699.4,1029.2Z M860.7,1004.7 L1019.5,979.0 L1019.3,977.5 L860.4,1003.2Z M1019.5,979.0 L1176.3,953.7 L1176.1,952.2 L1019.3,977.5Z M1176.3,953.7 L1202.3,949.5 L1202.0,948.0 L1176.1,952.2Z M-306.5,1234.2 L-130.3,1205.4 L-130.6,1203.8 L-306.8,1232.5Z M-130.3,1205.4 L43.5,1177.0 L43.2,1175.4 L-130.6,1203.8Z M43.5,1177.0 L214.9,1149.1 L214.6,1147.5 L43.2,1175.4Z M214.9,1149.1 L383.9,1121.5 L383.7,1119.9 L214.6,1147.5Z M383.9,1121.5 L550.7,1094.2 L550.4,1092.7 L383.7,1119.9Z M550.7,1094.2 L715.2,1067.4 L715.0,1065.8 L550.4,1092.7Z M715.2,1067.4 L877.6,1040.9 L877.3,1039.3 L715.0,1065.8Z M877.6,1040.9 L1037.8,1014.7 L1037.5,1013.2 L877.3,1039.3Z M1037.8,1014.7 L1195.8,988.9 L1195.6,987.4 L1037.5,1013.2Z M1195.8,988.9 L1222.0,984.7 L1221.7,983.1 L1195.6,987.4Z M-299.8,1274.7 L-121.9,1245.4 L-122.2,1243.7 L-300.0,1273.0Z M-121.9,1245.4 L53.4,1216.4 L53.2,1214.8 L-122.2,1243.7Z M53.4,1216.4 L226.3,1187.9 L226.1,1186.3 L53.2,1214.8Z M226.3,1187.9 L396.9,1159.8 L396.6,1158.2 L226.1,1186.3Z M396.9,1159.8 L565.1,1132.1 L564.9,1130.5 L396.6,1158.2Z M565.1,1132.1 L731.1,1104.7 L730.8,1103.1 L564.9,1130.5Z M731.1,1104.7 L894.8,1077.7 L894.5,1076.1 L730.8,1103.1Z M894.8,1077.7 L1056.3,1051.1 L1056.1,1049.5 L894.5,1076.1Z M1056.3,1051.1 L1215.7,1024.8 L1215.4,1023.3 L1056.1,1049.5Z M1215.7,1024.8 L1242.1,1020.5 L1241.8,1018.9 L1215.4,1023.3Z M-292.9,1316.0 L-113.4,1286.1 L-113.7,1284.4 L-293.2,1314.3Z M-113.4,1286.1 L63.6,1256.6 L63.3,1254.9 L-113.7,1284.4Z M63.6,1256.6 L238.1,1227.5 L237.8,1225.9 L63.3,1254.9Z M238.1,1227.5 L410.1,1198.9 L409.9,1197.2 L237.8,1225.9Z M410.1,1198.9 L579.8,1170.6 L579.6,1169.0 L409.9,1197.2Z M579.8,1170.6 L747.2,1142.7 L747.0,1141.1 L579.6,1169.0Z M747.2,1142.7 L912.3,1115.2 L912.1,1113.6 L747.0,1141.1Z M912.3,1115.2 L1075.2,1088.1 L1075.0,1086.5 L912.1,1113.6Z M1075.2,1088.1 L1235.9,1061.3 L1235.7,1059.8 L1075.0,1086.5Z M1235.9,1061.3 L1262.5,1056.9 L1262.2,1055.3 L1235.7,1059.8Z"/>
<path fill="#ffffff" d="M-357.1,359.1 L-342.0,436.6 L-339.7,436.2 L-354.9,358.7Z M-342.0,436.6 L-326.2,517.8 L-323.8,517.3 L-339.7,436.2Z M-326.2,517.8 L-309.6,602.9 L-307.2,602.4 L-323.8,517.3Z M-309.6,602.9 L-292.2,692.2 L-289.7,691.7 L-307.2,602.4Z M-292.2,692.2 L-273.9,786.0 L-271.3,785.5 L-289.7,691.7Z M-273.9,786.0 L-254.7,884.8 L-252.0,884.2 L-271.3,785.5Z M-254.7,884.8 L-234.4,988.8 L-231.6,988.2 L-252.0,884.2Z M-234.4,988.8 L-213.0,1098.5 L-210.1,1097.9 L-231.6,988.2Z M-213.0,1098.5 L-190.5,1214.5 L-187.4,1213.8 L-210.1,1097.9Z M-190.5,1214.5 L-166.6,1337.1 L-163.3,1336.5 L-187.4,1213.8Z M-124.1,329.3 L-103.8,405.4 L-101.6,404.8 L-122.0,328.7Z M-103.8,405.4 L-82.6,485.0 L-80.3,484.4 L-101.6,404.8Z M-82.6,485.0 L-60.4,568.5 L-58.0,567.9 L-80.3,484.4Z M-60.4,568.5 L-37.0,656.1 L-34.6,655.4 L-58.0,567.9Z M-37.0,656.1 L-12.5,748.0 L-10.0,747.3 L-34.6,655.4Z M-12.5,748.0 L13.3,844.7 L15.9,844.0 L-10.0,747.3Z M13.3,844.7 L40.4,946.5 L43.2,945.8 L15.9,844.0Z M40.4,946.5 L69.0,1053.9 L71.9,1053.1 L43.2,945.8Z M69.0,1053.9 L99.2,1167.3 L102.2,1166.5 L71.9,1053.1Z M99.2,1167.3 L131.2,1287.2 L134.3,1286.3 L102.2,1166.5Z M104.6,300.0 L129.9,374.7 L132.0,374.0 L106.7,299.3Z M129.9,374.7 L156.3,452.9 L158.6,452.1 L132.0,374.0Z M156.3,452.9 L184.0,534.8 L186.3,534.0 L158.6,452.1Z M184.0,534.8 L213.1,620.6 L215.5,619.8 L186.3,534.0Z M213.1,620.6 L243.6,710.8 L246.0,709.9 L215.5,619.8Z M243.6,710.8 L275.6,805.5 L278.2,804.6 L246.0,709.9Z M275.6,805.5 L309.3,905.2 L312.0,904.3 L278.2,804.6Z M309.3,905.2 L344.8,1010.3 L347.6,1009.4 L312.0,904.3Z M344.8,1010.3 L382.3,1121.2 L385.2,1120.2 L347.6,1009.4Z M382.3,1121.2 L422.0,1238.4 L425.0,1237.3 L385.2,1120.2Z M329.2,271.2 L359.3,344.6 L361.4,343.7 L331.3,270.4Z M359.3,344.6 L390.8,421.3 L392.9,420.4 L361.4,343.7Z M390.8,421.3 L423.7,501.7 L425.9,500.8 L392.9,420.4Z M423.7,501.7 L458.2,585.9 L460.5,585.0 L425.9,500.8Z M458.2,585.9 L494.4,674.3 L496.8,673.3 L460.5,585.0Z M494.4,674.3 L532.5,767.1 L535.0,766.1 L496.8,673.3Z M532.5,767.1 L572.5,864.8 L575.1,863.7 L535.0,766.1Z M572.5,864.8 L614.7,967.6 L617.3,966.5 L575.1,863.7Z M614.7,967.6 L659.1,1076.1 L661.9,1074.9 L617.3,966.5Z M659.1,1076.1 L706.1,1190.7 L709.0,1189.5 L661.9,1074.9Z M549.9,242.9 L584.6,315.0 L586.6,314.0 L551.8,242.0Z M584.6,315.0 L620.8,390.4 L622.9,389.3 L586.6,314.0Z M620.8,390.4 L658.8,469.2 L661.0,468.2 L622.9,389.3Z M658.8,469.2 L698.6,551.9 L700.8,550.8 L661.0,468.2Z M698.6,551.9 L740.3,638.5 L742.6,637.4 L700.8,550.8Z M740.3,638.5 L784.1,729.5 L786.5,728.4 L742.6,637.4Z M784.1,729.5 L830.2,825.2 L832.7,824.0 L786.5,728.4Z M830.2,825.2 L878.6,925.9 L881.2,924.6 L832.7,824.0Z M878.6,925.9 L929.7,1032.0 L932.4,1030.7 L881.2,924.6Z M929.7,1032.0 L983.7,1144.0 L986.5,1142.7 L932.4,1030.7Z M766.6,215.1 L805.7,285.9 L807.7,284.9 L768.5,214.1Z M805.7,285.9 L846.7,360.0 L848.7,358.8 L807.7,284.9Z M846.7,360.0 L889.5,437.4 L891.6,436.2 L848.7,358.8Z M889.5,437.4 L934.3,518.5 L936.5,517.3 L891.6,436.2Z M934.3,518.5 L981.3,603.5 L983.6,602.2 L936.5,517.3Z M981.3,603.5 L1030.6,692.7 L1033.0,691.4 L983.6,602.2Z M1030.6,692.7 L1082.5,786.4 L1084.9,785.1 L1033.0,691.4Z M1082.5,786.4 L1137.0,885.0 L1139.5,883.6 L1084.9,785.1Z M1137.0,885.0 L1194.4,988.9 L1197.0,987.4 L1139.5,883.6Z M1194.4,988.9 L1255.0,1098.5 L1257.7,1097.0 L1197.0,987.4Z M-428.2,504.4 L-281.5,484.8 L-281.8,482.4 L-428.5,502.0Z M-281.5,484.8 L-136.5,465.3 L-136.8,463.0 L-281.8,482.4Z M-136.5,465.3 L6.9,446.2 L6.6,443.8 L-136.8,463.0Z M6.9,446.2 L148.6,427.2 L148.3,424.9 L6.6,443.8Z M148.6,427.2 L288.8,408.4 L288.5,406.1 L148.3,424.9Z M288.8,408.4 L427.4,389.9 L427.1,387.6 L288.5,406.1Z M427.4,389.9 L564.4,371.6 L564.1,369.3 L427.1,387.6Z M564.4,371.6 L699.9,353.4 L699.6,351.2 L564.1,369.3Z M699.9,353.4 L834.0,335.5 L833.7,333.2 L699.6,351.2Z M834.0,335.5 L856.2,332.5 L855.9,330.3 L833.7,333.2Z M-404.4,647.4 L-251.9,626.1 L-252.2,623.6 L-404.7,644.9Z M-251.9,626.1 L-101.2,605.1 L-101.5,602.6 L-252.2,623.6Z M-101.2,605.1 L47.7,584.3 L47.4,581.8 L-101.5,602.6Z M47.7,584.3 L194.9,563.8 L194.5,561.3 L47.4,581.8Z M194.9,563.8 L340.3,543.5 L340.0,541.0 L194.5,561.3Z M340.3,543.5 L484.1,523.4 L483.7,521.0 L340.0,541.0Z M484.1,523.4 L626.1,503.6 L625.8,501.2 L483.7,521.0Z M626.1,503.6 L766.6,484.0 L766.2,481.6 L625.8,501.2Z M766.6,484.0 L905.4,464.6 L905.1,462.2 L766.2,481.6Z M905.4,464.6 L928.4,461.4 L928.1,459.0 L905.1,462.2Z M-378.5,802.6 L-219.7,779.4 L-220.1,776.8 L-378.9,799.9Z M-219.7,779.4 L-62.9,756.5 L-63.3,753.9 L-220.1,776.8Z M-62.9,756.5 L92.0,734.0 L91.6,731.3 L-63.3,753.9Z M92.0,734.0 L245.0,711.7 L244.6,709.1 L91.6,731.3Z M245.0,711.7 L396.1,689.6 L395.7,687.0 L244.6,709.1Z M396.1,689.6 L545.4,667.9 L545.0,665.3 L395.7,687.0Z M545.4,667.9 L692.9,646.3 L692.5,643.8 L545.0,665.3Z M692.9,646.3 L838.6,625.1 L838.2,622.6 L692.5,643.8Z M838.6,625.1 L982.6,604.1 L982.2,601.6 L838.2,622.6Z M982.6,604.1 L1006.5,600.6 L1006.1,598.1 L982.2,601.6Z M-350.3,971.5 L-184.7,946.2 L-185.1,943.4 L-350.8,968.7Z M-184.7,946.2 L-21.2,921.3 L-21.7,918.5 L-185.1,943.4Z M-21.2,921.3 L140.1,896.7 L139.7,893.9 L-21.7,918.5Z M140.1,896.7 L299.4,872.3 L299.0,869.6 L139.7,893.9Z M299.4,872.3 L456.7,848.3 L456.3,845.6 L299.0,869.6Z M456.7,848.3 L612.0,824.6 L611.6,821.9 L456.3,845.6Z M612.0,824.6 L765.3,801.2 L764.9,798.5 L611.6,821.9Z M765.3,801.2 L916.7,778.1 L916.3,775.4 L764.9,798.5Z M916.7,778.1 L1066.3,755.3 L1065.9,752.6 L916.3,775.4Z M1066.3,755.3 L1091.0,751.5 L1090.6,748.8 L1065.9,752.6Z M-319.5,1156.2 L-146.5,1128.5 L-147.0,1125.5 L-320.0,1153.1Z M-146.5,1128.5 L24.2,1101.1 L23.7,1098.1 L-147.0,1125.5Z M24.2,1101.1 L192.6,1074.2 L192.1,1071.2 L23.7,1098.1Z M192.6,1074.2 L358.8,1047.6 L358.3,1044.6 L192.1,1071.2Z M358.8,1047.6 L522.7,1021.3 L522.2,1018.4 L358.3,1044.6Z M522.7,1021.3 L684.5,995.4 L684.0,992.5 L522.2,1018.4Z M684.5,995.4 L844.2,969.9 L843.7,967.0 L684.0,992.5Z M844.2,969.9 L1001.7,944.7 L1001.3,941.8 L843.7,967.0Z M1001.7,944.7 L1157.3,919.8 L1156.8,916.9 L1001.3,941.8Z M1157.3,919.8 L1183.0,915.6 L1182.6,912.8 L1156.8,916.9Z M-285.7,1358.8 L-104.6,1328.3 L-105.1,1325.1 L-286.3,1355.6Z M-104.6,1328.3 L74.0,1298.3 L73.5,1295.1 L-105.1,1325.1Z M74.0,1298.3 L250.1,1268.6 L249.6,1265.5 L73.5,1295.1Z M250.1,1268.6 L423.7,1239.4 L423.2,1236.3 L249.6,1265.5Z M423.7,1239.4 L595.0,1210.6 L594.4,1207.5 L423.2,1236.3Z M595.0,1210.6 L763.8,1182.2 L763.3,1179.1 L594.4,1207.5Z M763.8,1182.2 L930.3,1154.2 L929.8,1151.1 L763.3,1179.1Z M930.3,1154.2 L1094.6,1126.5 L1094.1,1123.5 L929.8,1151.1Z M1094.6,1126.5 L1256.6,1099.3 L1256.1,1096.2 L1094.1,1123.5Z M1256.6,1099.3 L1283.4,1094.8 L1282.9,1091.7 L1256.1,1096.2Z"/>
<path d="M-450.5,370.5 L788.7,211.4 L1283.2,1093.2" fill="none" stroke="#fff" stroke-width="2" stroke-linejoin="miter"/>
<path d="M314.0,570.2 L466.0,571.9 L578.7,573.0 L586.0,574.5 L591.5,578.0 L594.4,582.0 L607.2,615.5 L607.0,620.5 L603.5,623.8 L599.3,625.0 L480.8,640.8 L430.0,640.8 L375.0,640.0 L345.0,633.0 L311.9,623.4 L303.0,618.5 L297.5,611.0 L294.2,602.0 L292.6,593.0 L294.5,584.0 L299.0,577.0 L304.4,572.5 L309.0,570.8Z" fill="none" stroke="#1c6e5e" stroke-width="2.8" stroke-linejoin="round"/>
<defs><pattern id="padpat" patternUnits="userSpaceOnUse" width="4" height="3.5" patternTransform="rotate(-8)"><rect width="4" height="3.5" fill="#1fc41f"/><rect x="0" y="0" width="4" height="0.9" fill="#0e9a0e"/><rect x="0" y="0" width="0.9" height="3.5" fill="#14a814"/></pattern></defs>
<path d="M303.8,592.5 L315.0,577.5 L326.0,590.0 L350.0,610.0 L310.0,616.2Z" fill="url(#padpat)"/>
<path d="M372.5,616.2 L410.0,605.0 L415.0,607.5 L418.8,628.8 L378.8,635.0Z" fill="url(#padpat)"/>
<path d="M449.3,599.7 L466.3,598.5 L580.0,581.6 L595.7,619.0 L474.7,634.8 L473.5,630.0 L461.4,631.0Z" fill="url(#padpat)"/>
<clipPath id="tclip"><path d="M467.5,418.0 L574.0,304.0 L578.7,314.0 L583.0,332.0 L581.0,460.0 L579.5,612.0 L467.5,628.0Z"/></clipPath>
<path d="M467.5,418.0 L574.0,304.0 L578.7,314.0 L583.0,332.0 L581.0,460.0 L579.5,612.0 L467.5,628.0Z" fill="#05ad05"/>
<g clip-path="url(#tclip)" fill="#009d00">
<rect x="477.9" y="266.6" width="11.8" height="10.0"/>
<rect x="477.9" y="286.6" width="11.8" height="10.0"/>
<rect x="477.9" y="306.6" width="11.8" height="10.0"/>
<rect x="477.9" y="326.6" width="11.8" height="10.0"/>
<rect x="477.9" y="346.6" width="11.8" height="10.0"/>
<rect x="477.9" y="366.6" width="11.8" height="10.0"/>
<rect x="477.9" y="386.6" width="11.8" height="10.0"/>
<rect x="477.9" y="406.6" width="11.8" height="1.4"/>
<rect x="489.7" y="255.3" width="11.8" height="10.0"/>
<rect x="489.7" y="275.3" width="11.8" height="10.0"/>
<rect x="489.7" y="295.3" width="11.8" height="10.0"/>
<rect x="489.7" y="315.3" width="11.8" height="10.0"/>
<rect x="489.7" y="335.3" width="11.8" height="10.0"/>
<rect x="489.7" y="355.3" width="11.8" height="10.0"/>
<rect x="489.7" y="375.3" width="11.8" height="10.0"/>
<rect x="489.7" y="395.3" width="11.8" height="10.0"/>
<rect x="501.5" y="244.0" width="11.8" height="10.0"/>
<rect x="501.5" y="264.0" width="11.8" height="10.0"/>
<rect x="501.5" y="284.0" width="11.8" height="10.0"/>
<rect x="501.5" y="304.0" width="11.8" height="10.0"/>
<rect x="501.5" y="324.0" width="11.8" height="10.0"/>
<rect x="501.5" y="344.0" width="11.8" height="10.0"/>
<rect x="501.5" y="364.0" width="11.8" height="10.0"/>
<rect x="501.5" y="384.0" width="11.8" height="10.0"/>
<rect x="501.5" y="404.0" width="11.8" height="4.0"/>
<rect x="513.3" y="232.7" width="11.8" height="10.0"/>
<rect x="513.3" y="252.7" width="11.8" height="10.0"/>
<rect x="513.3" y="272.7" width="11.8" height="10.0"/>
<rect x="513.3" y="292.7" width="11.8" height="10.0"/>
<rect x="513.3" y="312.7" width="11.8" height="10.0"/>
<rect x="513.3" y="332.7" width="11.8" height="10.0"/>
<rect x="513.3" y="352.7" width="11.8" height="10.0"/>
<rect x="513.3" y="372.7" width="11.8" height="10.0"/>
<rect x="513.3" y="392.7" width="11.8" height="10.0"/>
<rect x="525.1" y="221.4" width="11.8" height="10.0"/>
<rect x="525.1" y="241.4" width="11.8" height="10.0"/>
<rect x="525.1" y="261.4" width="11.8" height="10.0"/>
<rect x="525.1" y="281.4" width="11.8" height="10.0"/>
<rect x="525.1" y="301.4" width="11.8" height="10.0"/>
<rect x="525.1" y="321.4" width="11.8" height="10.0"/>
<rect x="525.1" y="341.4" width="11.8" height="10.0"/>
<rect x="525.1" y="361.4" width="11.8" height="10.0"/>
<rect x="525.1" y="381.4" width="11.8" height="10.0"/>
<rect x="525.1" y="401.4" width="11.8" height="6.6"/>
<rect x="536.9" y="210.1" width="11.8" height="10.0"/>
<rect x="536.9" y="230.1" width="11.8" height="10.0"/>
<rect x="536.9" y="250.1" width="11.8" height="10.0"/>
<rect x="536.9" y="270.1" width="11.8" height="10.0"/>
<rect x="536.9" y="290.1" width="11.8" height="10.0"/>
<rect x="536.9" y="310.1" width="11.8" height="10.0"/>
<rect x="536.9" y="330.1" width="11.8" height="10.0"/>
<rect x="536.9" y="350.1" width="11.8" height="10.0"/>
<rect x="536.9" y="370.1" width="11.8" height="10.0"/>
<rect x="536.9" y="390.1" width="11.8" height="10.0"/>
<rect x="548.7" y="198.8" width="11.8" height="10.0"/>
<rect x="548.7" y="218.8" width="11.8" height="10.0"/>
<rect x="548.7" y="238.8" width="11.8" height="10.0"/>
<rect x="548.7" y="258.8" width="11.8" height="10.0"/>
<rect x="548.7" y="278.8" width="11.8" height="10.0"/>
<rect x="548.7" y="298.8" width="11.8" height="10.0"/>
<rect x="548.7" y="318.8" width="11.8" height="10.0"/>
<rect x="548.7" y="338.8" width="11.8" height="10.0"/>
<rect x="548.7" y="358.8" width="11.8" height="10.0"/>
<rect x="548.7" y="378.8" width="11.8" height="10.0"/>
<rect x="548.7" y="398.8" width="11.8" height="9.2"/>
<rect x="560.5" y="187.5" width="11.8" height="10.0"/>
<rect x="560.5" y="207.5" width="11.8" height="10.0"/>
<rect x="560.5" y="227.5" width="11.8" height="10.0"/>
<rect x="560.5" y="247.5" width="11.8" height="10.0"/>
<rect x="560.5" y="267.5" width="11.8" height="10.0"/>
<rect x="560.5" y="287.5" width="11.8" height="10.0"/>
<rect x="560.5" y="307.5" width="11.8" height="10.0"/>
<rect x="560.5" y="327.5" width="11.8" height="10.0"/>
<rect x="560.5" y="347.5" width="11.8" height="10.0"/>
<rect x="560.5" y="367.5" width="11.8" height="10.0"/>
<rect x="560.5" y="387.5" width="11.8" height="10.0"/>
<rect x="572.3" y="176.2" width="11.8" height="10.0"/>
<rect x="572.3" y="196.2" width="11.8" height="10.0"/>
<rect x="572.3" y="216.2" width="11.8" height="10.0"/>
<rect x="572.3" y="236.2" width="11.8" height="10.0"/>
<rect x="572.3" y="256.2" width="11.8" height="10.0"/>
<rect x="572.3" y="276.2" width="11.8" height="10.0"/>
<rect x="572.3" y="296.2" width="11.8" height="10.0"/>
<rect x="572.3" y="316.2" width="11.8" height="10.0"/>
<rect x="572.3" y="336.2" width="11.8" height="10.0"/>
<rect x="572.3" y="356.2" width="11.8" height="10.0"/>
<rect x="572.3" y="376.2" width="11.8" height="10.0"/>
<rect x="484" y="408" width="4.6" height="215"/>
<rect x="500.4" y="408" width="9.6" height="215"/>
<rect x="524" y="408" width="9.7" height="215"/>
<rect x="545.6" y="408" width="10.4" height="215"/>
<rect x="569" y="408" width="10" height="215"/>
</g>
<path d="M500.8,179.6 C501.6,177.1 503.2,176.4 504.8,175.5 C506.4,174.6 501.5,175.5 510.2,173.9 C518.9,172.3 540.4,168.2 557.2,166.1 C574.0,164.0 600.7,162.1 611.0,161.4 C621.3,160.7 617.1,161.3 619.0,162.1 C620.9,162.9 621.7,163.6 622.4,166.1 C623.1,168.6 623.6,168.4 623.0,176.9 C622.4,185.4 620.8,206.7 619.0,217.2 C617.2,227.7 614.8,232.6 612.5,240.0 C610.2,247.4 608.4,253.2 605.0,261.5 C601.6,269.8 596.1,281.2 592.0,289.5 C587.9,297.8 583.7,305.5 580.2,311.0 C576.7,316.5 574.2,318.7 571.0,322.5 C567.8,326.3 564.6,330.1 561.0,334.0 C557.4,337.9 553.0,342.3 549.5,346.0 C546.0,349.7 544.4,351.8 540.0,356.0 C535.6,360.2 528.0,366.2 523.0,371.0 C518.0,375.8 514.7,380.0 510.0,385.0 C505.3,390.0 502.1,392.6 495.0,401.0 C487.9,409.4 475.1,425.0 467.7,435.4 C460.3,445.8 454.9,455.9 450.5,463.3 C446.1,470.7 443.9,473.6 441.3,480.0 C438.7,486.4 437.3,492.9 434.8,501.5 C432.3,510.1 428.3,522.6 426.2,531.6 C424.1,540.6 423.1,546.0 422.0,555.3 C420.9,564.6 420.0,579.3 419.8,587.5 C419.6,595.7 422.0,600.4 420.9,604.7 C419.8,609.0 417.1,611.3 413.3,613.3 C409.5,615.3 405.1,616.6 398.3,616.6 C391.5,616.6 381.5,615.3 372.5,613.3 C363.5,611.3 352.8,607.4 344.5,604.7 C336.2,602.0 327.6,601.9 323.0,597.2 C318.4,592.6 317.9,585.6 316.6,576.8 C315.4,568.0 315.5,555.2 315.5,544.5 C315.5,533.8 315.5,522.2 316.6,512.3 C317.7,502.4 319.8,493.9 322.0,485.0 C324.2,476.1 326.6,468.0 330.1,459.0 C333.6,450.0 337.3,440.7 343.0,431.0 C348.7,421.3 357.3,410.7 364.5,401.0 C371.7,391.3 378.8,381.2 386.0,373.0 C393.2,364.8 400.3,358.8 407.5,351.5 C414.7,344.2 421.5,336.8 429.0,329.0 C436.5,321.2 444.8,312.2 452.3,304.5 C459.8,296.8 468.1,289.8 473.8,283.0 C479.5,276.2 483.5,270.9 486.7,263.7 C489.9,256.5 491.4,247.8 493.1,240.0 C494.8,232.2 495.6,225.5 496.7,217.2 C497.8,208.9 499.3,196.6 500.0,190.3 C500.7,184.0 500.0,182.1 500.8,179.6Z" fill="url(#org)"/>
<path d="M504.0,178.0 C503.7,176.2 501.1,176.8 510.0,175.0 C518.9,173.2 540.4,169.5 557.2,167.5 C574.0,165.5 600.7,163.5 611.0,162.8 C621.3,162.1 617.3,162.3 619.0,163.5 C620.7,164.7 621.2,167.4 621.0,170.0 C620.8,172.6 620.7,176.2 618.0,179.0 C615.3,181.8 611.3,184.8 605.0,187.0 C598.7,189.2 588.0,190.8 580.0,192.0 C572.0,193.2 565.3,194.3 557.0,194.5 C548.7,194.7 537.5,194.4 530.0,193.0 C522.5,191.6 516.3,188.5 512.0,186.0 C507.7,183.5 504.3,179.8 504.0,178.0Z" fill="#a82a28" stroke="#e0c83c" stroke-width="0.9"/>
<path d="M508.0,178.5 C507.7,177.1 504.8,178.0 513.0,176.5 C521.2,175.0 541.2,171.4 557.2,169.5 C573.2,167.6 599.2,165.6 609.0,165.0 C618.8,164.4 614.5,165.0 616.0,166.0 C617.5,167.0 618.2,168.9 618.0,171.0 C617.8,173.1 617.3,176.2 615.0,178.5 C612.7,180.8 609.8,183.1 604.0,185.0 C598.2,186.9 587.8,188.8 580.0,190.0 C572.2,191.2 565.2,192.3 557.0,192.5 C548.8,192.7 538.0,192.2 531.0,191.0 C524.0,189.8 518.8,187.1 515.0,185.0 C511.2,182.9 508.3,179.9 508.0,178.5Z" fill="none" stroke="#e0c83c" stroke-width="0.8"/>
<path d="M532.0,173.0 C534.5,170.8 544.3,171.6 557.0,170.5 C569.7,169.4 598.8,166.2 608.0,166.5 C617.2,166.8 612.0,169.8 612.0,172.0 C612.0,174.2 611.7,177.6 608.0,180.0 C604.3,182.4 598.5,185.2 590.0,186.5 C581.5,187.8 565.0,188.4 557.0,188.0 C549.0,187.6 546.2,186.5 542.0,184.0 C537.8,181.5 529.5,175.2 532.0,173.0Z" fill="none" stroke="#e0c83c" stroke-width="0.8"/>
</svg>
<div class="b" style="left:1px;top:49px;width:232px;height:208px;background:rgba(88,88,88,0.97);"></div>
<div class="t " style="left:6px;top:55.6px;font-size:7.3px;color:#f2f2f2;font-weight:400;">Typ</div>
<div class="t " style="left:103px;top:55.6px;font-size:7.3px;color:#f2f2f2;font-weight:400;">Čas</div>
<div class="t " style="left:122.5px;top:55.6px;font-size:7.3px;color:#f2f2f2;font-weight:400;">Procentuálně</div>
<div class="t " style="left:171px;top:55.6px;font-size:7.3px;color:#f2f2f2;font-weight:400;">Použito filamentu</div>
<div class="b" style="left:3px;top:65px;width:229px;height:1.2px;background:#c77a4a;"></div>
<div class="b" style="left:6px;top:69.0px;width:8px;height:8px;background:#f7e243;"></div>
<div class="t " style="left:20px;top:69.6px;font-size:7.3px;color:#f2f2f2;font-weight:400;">Perimetr</div>
<div class="t " style="left:103px;top:69.6px;font-size:7.3px;color:#f2f2f2;font-weight:400;">27m</div>
<div class="b" style="left:122.5px;top:69.5px;width:13.6px;height:7px;background:#f57c34;"></div>
<div class="t" style="left:120px;width:45px;text-align:right;top:68.6px;font-size:7.3px;color:#f2f2f2">20,8%</div>
<div class="t " style="left:171px;top:69.6px;font-size:7.3px;color:#f2f2f2;font-weight:400;">0,90 m</div>
<div class="t " style="left:199px;top:69.6px;font-size:7.3px;color:#f2f2f2;font-weight:400;">2,67 g</div>
<div class="b" style="left:6px;top:80.85px;width:8px;height:8px;background:#f98a34;"></div>
<div class="t " style="left:20px;top:81.5px;font-size:7.3px;color:#f2f2f2;font-weight:400;">Vnější perimetr</div>
<div class="t " style="left:103px;top:81.5px;font-size:7.3px;color:#f2f2f2;font-weight:400;">31m</div>
<div class="b" style="left:122.5px;top:81.35px;width:15.6px;height:7px;background:#f57c34;"></div>
<div class="t" style="left:120px;width:45px;text-align:right;top:80.4px;font-size:7.3px;color:#f2f2f2">24,1%</div>
<div class="t " style="left:171px;top:81.5px;font-size:7.3px;color:#f2f2f2;font-weight:400;">0,94 m</div>
<div class="t " style="left:199px;top:81.5px;font-size:7.3px;color:#f2f2f2;font-weight:400;">2,80 g</div>
<div class="b" style="left:6px;top:92.7px;width:8px;height:8px;background:#1a1af2;"></div>
<div class="t " style="left:20px;top:93.3px;font-size:7.3px;color:#f2f2f2;font-weight:400;">Perimetr převisu</div>
<div class="t " style="left:103px;top:93.3px;font-size:7.3px;color:#f2f2f2;font-weight:400;">1s</div>
<div class="b" style="left:122.5px;top:93.2px;width:1.2px;height:7px;background:#f57c34;"></div>
<div class="t" style="left:120px;width:45px;text-align:right;top:92.3px;font-size:7.3px;color:#f2f2f2">0,0%</div>
<div class="t " style="left:171px;top:93.3px;font-size:7.3px;color:#f2f2f2;font-weight:400;">0,00 m</div>
<div class="t " style="left:199px;top:93.3px;font-size:7.3px;color:#f2f2f2;font-weight:400;">0,01 g</div>
<div class="b" style="left:6px;top:104.55px;width:8px;height:8px;background:#b02a2a;"></div>
<div class="t " style="left:20px;top:105.2px;font-size:7.3px;color:#f2f2f2;font-weight:400;">Vnitřní výplň</div>
<div class="t " style="left:103px;top:105.2px;font-size:7.3px;color:#f2f2f2;font-weight:400;">39m</div>
<div class="b" style="left:122.5px;top:105.05px;width:19.2px;height:7px;background:#f57c34;"></div>
<div class="t" style="left:120px;width:45px;text-align:right;top:104.1px;font-size:7.3px;color:#f2f2f2">30,0%</div>
<div class="t " style="left:171px;top:105.2px;font-size:7.3px;color:#f2f2f2;font-weight:400;">1,09 m</div>
<div class="t " style="left:199px;top:105.2px;font-size:7.3px;color:#f2f2f2;font-weight:400;">3,26 g</div>
<div class="b" style="left:6px;top:116.4px;width:8px;height:8px;background:#9a52d6;"></div>
<div class="t " style="left:20px;top:117.0px;font-size:7.3px;color:#f2f2f2;font-weight:400;">Plná výplň</div>
<div class="t " style="left:103px;top:117.0px;font-size:7.3px;color:#f2f2f2;font-weight:400;">6m</div>
<div class="b" style="left:122.5px;top:116.9px;width:3.2px;height:7px;background:#f57c34;"></div>
<div class="t" style="left:120px;width:45px;text-align:right;top:116.0px;font-size:7.3px;color:#f2f2f2">4,2%</div>
<div class="t " style="left:171px;top:117.0px;font-size:7.3px;color:#f2f2f2;font-weight:400;">0,13 m</div>
<div class="t " style="left:199px;top:117.0px;font-size:7.3px;color:#f2f2f2;font-weight:400;">0,39 g</div>
<div class="b" style="left:6px;top:128.25px;width:8px;height:8px;background:#ee3a3a;"></div>
<div class="t " style="left:20px;top:128.9px;font-size:7.3px;color:#f2f2f2;font-weight:400;">Vrchní plné výplně</div>
<div class="t " style="left:103px;top:128.9px;font-size:7.3px;color:#f2f2f2;font-weight:400;">22s</div>
<div class="b" style="left:122.5px;top:128.75px;width:1.2px;height:7px;background:#f57c34;"></div>
<div class="t" style="left:120px;width:45px;text-align:right;top:127.8px;font-size:7.3px;color:#f2f2f2">0,3%</div>
<div class="t " style="left:171px;top:128.9px;font-size:7.3px;color:#f2f2f2;font-weight:400;">0,02 m</div>
<div class="t " style="left:199px;top:128.9px;font-size:7.3px;color:#f2f2f2;font-weight:400;">0,05 g</div>
<div class="b" style="left:6px;top:140.1px;width:8px;height:8px;background:#4d86c9;"></div>
<div class="t " style="left:20px;top:140.7px;font-size:7.3px;color:#f2f2f2;font-weight:400;">Výplň mostů</div>
<div class="t " style="left:103px;top:140.7px;font-size:7.3px;color:#f2f2f2;font-weight:400;">18s</div>
<div class="b" style="left:122.5px;top:140.6px;width:1.2px;height:7px;background:#f57c34;"></div>
<div class="t" style="left:120px;width:45px;text-align:right;top:139.7px;font-size:7.3px;color:#f2f2f2">0,2%</div>
<div class="t " style="left:171px;top:140.7px;font-size:7.3px;color:#f2f2f2;font-weight:400;">0,02 m</div>
<div class="t " style="left:199px;top:140.7px;font-size:7.3px;color:#f2f2f2;font-weight:400;">0,06 g</div>
<div class="b" style="left:6px;top:151.95px;width:8px;height:8px;background:#00867a;"></div>
<div class="t " style="left:20px;top:152.6px;font-size:7.3px;color:#f2f2f2;font-weight:400;">Obrys/Límec</div>
<div class="t " style="left:103px;top:152.6px;font-size:7.3px;color:#f2f2f2;font-weight:400;">16s</div>
<div class="b" style="left:122.5px;top:152.45px;width:1.2px;height:7px;background:#f57c34;"></div>
<div class="t" style="left:120px;width:45px;text-align:right;top:151.5px;font-size:7.3px;color:#f2f2f2">0,2%</div>
<div class="t " style="left:171px;top:152.6px;font-size:7.3px;color:#f2f2f2;font-weight:400;">0,01 m</div>
<div class="t " style="left:199px;top:152.6px;font-size:7.3px;color:#f2f2f2;font-weight:400;">0,04 g</div>
<div class="b" style="left:6px;top:163.8px;width:8px;height:8px;background:#12f012;"></div>
<div class="t " style="left:20px;top:164.4px;font-size:7.3px;color:#f2f2f2;font-weight:400;">Podpěry</div>
<div class="t " style="left:103px;top:164.4px;font-size:7.3px;color:#f2f2f2;font-weight:400;">26m</div>
<div class="b" style="left:122.5px;top:164.3px;width:12.8px;height:7px;background:#f57c34;"></div>
<div class="t" style="left:120px;width:45px;text-align:right;top:163.4px;font-size:7.3px;color:#f2f2f2">19,9%</div>
<div class="t " style="left:171px;top:164.4px;font-size:7.3px;color:#f2f2f2;font-weight:400;">0,69 m</div>
<div class="t " style="left:199px;top:164.4px;font-size:7.3px;color:#f2f2f2;font-weight:400;">2,06 g</div>
<div class="b" style="left:6px;top:175.64999999999998px;width:8px;height:8px;background:#0b800b;"></div>
<div class="t " style="left:20px;top:176.3px;font-size:7.3px;color:#f2f2f2;font-weight:400;">Kontaktní vrstvy podpěr</div>
<div class="t " style="left:103px;top:176.3px;font-size:7.3px;color:#f2f2f2;font-weight:400;">7s</div>
<div class="b" style="left:122.5px;top:176.14999999999998px;width:1.2px;height:7px;background:#f57c34;"></div>
<div class="t" style="left:120px;width:45px;text-align:right;top:175.2px;font-size:7.3px;color:#f2f2f2">0,1%</div>
<div class="t " style="left:171px;top:176.3px;font-size:7.3px;color:#f2f2f2;font-weight:400;">0,00 m</div>
<div class="t " style="left:199px;top:176.3px;font-size:7.3px;color:#f2f2f2;font-weight:400;">0,01 g</div>
<div class="b" style="left:6px;top:187.5px;width:8px;height:8px;background:#5ed69a;"></div>
<div class="t " style="left:20px;top:188.1px;font-size:7.3px;color:#f2f2f2;font-weight:400;">Vlastní</div>
<div class="t " style="left:103px;top:188.1px;font-size:7.3px;color:#f2f2f2;font-weight:400;">12s</div>
<div class="b" style="left:122.5px;top:188.0px;width:1.2px;height:7px;background:#f57c34;"></div>
<div class="t" style="left:120px;width:45px;text-align:right;top:187.1px;font-size:7.3px;color:#f2f2f2">0,2%</div>
<div class="t " style="left:171px;top:188.1px;font-size:7.3px;color:#f2f2f2;font-weight:400;">0,02 m</div>
<div class="t " style="left:199px;top:188.1px;font-size:7.3px;color:#f2f2f2;font-weight:400;">0,06 g</div>
<div class="t " style="left:6px;top:203.1px;font-size:7.3px;color:#f2f2f2;font-weight:400;">Odhadované časy tisku [Normální režim]:</div>
<div class="b" style="left:3px;top:213px;width:229px;height:1.2px;background:#c77a4a;"></div>
<div class="t " style="left:6px;top:217.1px;font-size:7.3px;color:#f2f2f2;font-weight:400;">První vrstva:</div>
<div class="t " style="left:50px;top:217.1px;font-size:7.3px;color:#f2f2f2;font-weight:400;">1m</div>
<div class="t " style="left:6px;top:229.1px;font-size:7.3px;color:#f2f2f2;font-weight:400;">Celkem:</div>
<div class="t " style="left:50px;top:229.1px;font-size:7.3px;color:#f2f2f2;font-weight:400;">2h10m</div>
<div class="b" style="left:5px;top:240px;width:42px;height:13px;background:#d2662e;"></div>
<div class="t " style="left:8px;top:243.1px;font-size:7.3px;color:#fbe8dc;font-weight:400;">Tichý režim</div>
<svg style="left:1px;top:49px" width="867" height="663" viewBox="1 49 867 663"><g font-family="Liberation Sans" font-size="45" font-weight="bold" fill="#fafafa"><text transform="translate(83,668.5) rotate(84) scale(0.6,1)">O</text><text transform="translate(85,689) rotate(84) scale(0.6,1)">R</text><text transform="translate(87,706.5) rotate(84) scale(0.6,1)">I</text></g></svg>
<svg style="left:1px;top:666px" width="87" height="46" viewBox="1 666 87 46">
<rect x="1" y="666" width="86" height="46" rx="2" fill="rgba(25,25,25,0.85)"/>
<rect x="44" y="667" width="42" height="44" fill="rgba(10,10,10,0.5)"/>
<g fill="none" stroke="#ffffff" stroke-width="1.3">
<path d="M7,681 L14,672 L41,672 L41,698 L33,707 L7,707 Z M7,681 L33,681 L41,672 M33,681 L33,707"/>
</g>
<g fill="none" stroke="#ffffff" stroke-width="1">
<path d="M48,681 L56,672 L82,672 L74,681 Z"/>
<path d="M48,684.0 L74,684.0 L82,675.0"/><path d="M48,686.6 L74,686.6 L82,677.6"/><path d="M48,689.2 L74,689.2 L82,680.2"/><path d="M48,691.8 L74,691.8 L82,682.8"/><path d="M48,694.4 L74,694.4 L82,685.4"/><path d="M48,697.0 L74,697.0 L82,688.0"/><path d="M48,699.6 L74,699.6 L82,690.6"/><path d="M48,702.2 L74,702.2 L82,693.2"/><path d="M48,704.8 L74,704.8 L82,695.8"/>
</g>
</svg>
<div class="b" style="left:867px;top:49px;width:1px;height:663px;background:#d8d8d8;"></div>
<div class="t " style="left:871px;top:50.0px;font-size:7.3px;color:#111;font-weight:400;">100,00</div>
<div class="t " style="left:871px;top:60.5px;font-size:7.3px;color:#111;font-weight:400;">(796)</div>
<svg style="left:868px;top:49px" width="68" height="695" viewBox="868 49 68 695"><g stroke="#b8b8b8" stroke-width="0.8"><line x1="894" y1="58.0" x2="897" y2="58.0"/><line x1="894" y1="62.1" x2="897" y2="62.1"/><line x1="894" y1="66.3" x2="897" y2="66.3"/><line x1="894" y1="70.5" x2="897" y2="70.5"/><line x1="894" y1="74.6" x2="897" y2="74.6"/><line x1="894" y1="78.8" x2="897" y2="78.8"/><line x1="894" y1="82.9" x2="897" y2="82.9"/><line x1="894" y1="87.1" x2="897" y2="87.1"/><line x1="894" y1="91.2" x2="897" y2="91.2"/><line x1="894" y1="95.4" x2="897" y2="95.4"/><line x1="894" y1="99.5" x2="897" y2="99.5"/><line x1="894" y1="103.7" x2="897" y2="103.7"/><line x1="894" y1="107.8" x2="897" y2="107.8"/><line x1="894" y1="112.0" x2="897" y2="112.0"/><line x1="894" y1="116.1" x2="897" y2="116.1"/><line x1="894" y1="120.3" x2="897" y2="120.3"/><line x1="894" y1="124.4" x2="897" y2="124.4"/><line x1="894" y1="128.6" x2="897" y2="128.6"/><line x1="894" y1="132.7" x2="897" y2="132.7"/><line x1="894" y1="136.9" x2="897" y2="136.9"/><line x1="894" y1="141.0" x2="897" y2="141.0"/><line x1="894" y1="145.2" x2="897" y2="145.2"/><line x1="894" y1="149.3" x2="897" y2="149.3"/><line x1="894" y1="153.5" x2="897" y2="153.5"/><line x1="894" y1="157.6" x2="897" y2="157.6"/><line x1="894" y1="161.8" x2="897" y2="161.8"/><line x1="894" y1="165.9" x2="897" y2="165.9"/><line x1="894" y1="170.1" x2="897" y2="170.1"/><line x1="894" y1="174.2" x2="897" y2="174.2"/><line x1="894" y1="178.4" x2="897" y2="178.4"/><line x1="894" y1="182.5" x2="897" y2="182.5"/><line x1="894" y1="186.7" x2="897" y2="186.7"/><line x1="894" y1="190.8" x2="897" y2="190.8"/><line x1="894" y1="195.0" x2="897" y2="195.0"/><line x1="894" y1="199.1" x2="897" y2="199.1"/><line x1="894" y1="203.3" x2="897" y2="203.3"/><line x1="894" y1="207.4" x2="897" y2="207.4"/><line x1="894" y1="211.6" x2="897" y2="211.6"/><line x1="894" y1="215.7" x2="897" y2="215.7"/><line x1="894" y1="219.9" x2="897" y2="219.9"/><line x1="894" y1="224.0" x2="897" y2="224.0"/><line x1="894" y1="228.2" x2="897" y2="228.2"/><line x1="894" y1="232.3" x2="897" y2="232.3"/><line x1="894" y1="236.5" x2="897" y2="236.5"/><line x1="894" y1="240.6" x2="897" y2="240.6"/><line x1="894" y1="244.8" x2="897" y2="244.8"/><line x1="894" y1="248.9" x2="897" y2="248.9"/><line x1="894" y1="253.1" x2="897" y2="253.1"/><line x1="894" y1="257.2" x2="897" y2="257.2"/><line x1="894" y1="261.4" x2="897" y2="261.4"/><line x1="894" y1="265.5" x2="897" y2="265.5"/><line x1="894" y1="269.7" x2="897" y2="269.7"/><line x1="894" y1="273.8" x2="897" y2="273.8"/><line x1="894" y1="278.0" x2="897" y2="278.0"/><line x1="894" y1="282.1" x2="897" y2="282.1"/><line x1="894" y1="286.3" x2="897" y2="286.3"/><line x1="894" y1="290.4" x2="897" y2="290.4"/><line x1="894" y1="294.6" x2="897" y2="294.6"/><line x1="894" y1="298.7" x2="897" y2="298.7"/><line x1="894" y1="302.8" x2="897" y2="302.8"/><line x1="894" y1="307.0" x2="897" y2="307.0"/><line x1="894" y1="311.1" x2="897" y2="311.1"/><line x1="894" y1="315.3" x2="897" y2="315.3"/><line x1="894" y1="319.4" x2="897" y2="319.4"/><line x1="894" y1="323.6" x2="897" y2="323.6"/><line x1="894" y1="327.7" x2="897" y2="327.7"/><line x1="894" y1="331.9" x2="897" y2="331.9"/><line x1="894" y1="336.0" x2="897" y2="336.0"/><line x1="894" y1="340.2" x2="897" y2="340.2"/><line x1="894" y1="344.3" x2="897" y2="344.3"/><line x1="894" y1="348.5" x2="897" y2="348.5"/><line x1="894" y1="352.6" x2="897" y2="352.6"/><line x1="894" y1="356.8" x2="897" y2="356.8"/><line x1="894" y1="360.9" x2="897" y2="360.9"/><line x1="894" y1="365.1" x2="897" y2="365.1"/><line x1="894" y1="369.2" x2="897" y2="369.2"/><line x1="894" y1="373.4" x2="897" y2="373.4"/><line x1="894" y1="377.5" x2="897" y2="377.5"/><line x1="894" y1="381.7" x2="897" y2="381.7"/><line x1="894" y1="385.8" x2="897" y2="385.8"/><line x1="894" y1="390.0" x2="897" y2="390.0"/><line x1="894" y1="394.1" x2="897" y2="394.1"/><line x1="894" y1="398.3" x2="897" y2="398.3"/><line x1="894" y1="402.4" x2="897" y2="402.4"/><line x1="894" y1="406.6" x2="897" y2="406.6"/><line x1="894" y1="410.7" x2="897" y2="410.7"/><line x1="894" y1="414.9" x2="897" y2="414.9"/><line x1="894" y1="419.0" x2="897" y2="419.0"/><line x1="894" y1="423.2" x2="897" y2="423.2"/><line x1="894" y1="427.3" x2="897" y2="427.3"/><line x1="894" y1="431.5" x2="897" y2="431.5"/><line x1="894" y1="435.6" x2="897" y2="435.6"/><line x1="894" y1="439.8" x2="897" y2="439.8"/><line x1="894" y1="443.9" x2="897" y2="443.9"/><line x1="894" y1="448.1" x2="897" y2="448.1"/><line x1="894" y1="452.2" x2="897" y2="452.2"/><line x1="894" y1="456.4" x2="897" y2="456.4"/><line x1="894" y1="460.5" x2="897" y2="460.5"/><line x1="894" y1="464.7" x2="897" y2="464.7"/><line x1="894" y1="468.8" x2="897" y2="468.8"/><line x1="894" y1="473.0" x2="897" y2="473.0"/><line x1="894" y1="477.1" x2="897" y2="477.1"/><line x1="894" y1="481.3" x2="897" y2="481.3"/><line x1="894" y1="485.4" x2="897" y2="485.4"/><line x1="894" y1="489.6" x2="897" y2="489.6"/><line x1="894" y1="493.7" x2="897" y2="493.7"/><line x1="894" y1="497.9" x2="897" y2="497.9"/><line x1="894" y1="502.0" x2="897" y2="502.0"/><line x1="894" y1="506.2" x2="897" y2="506.2"/><line x1="894" y1="510.3" x2="897" y2="510.3"/><line x1="894" y1="514.5" x2="897" y2="514.5"/><line x1="894" y1="518.6" x2="897" y2="518.6"/><line x1="894" y1="522.8" x2="897" y2="522.8"/><line x1="894" y1="526.9" x2="897" y2="526.9"/><line x1="894" y1="531.1" x2="897" y2="531.1"/><line x1="894" y1="535.2" x2="897" y2="535.2"/><line x1="894" y1="539.4" x2="897" y2="539.4"/><line x1="894" y1="543.5" x2="897" y2="543.5"/><line x1="894" y1="547.7" x2="897" y2="547.7"/><line x1="894" y1="551.8" x2="897" y2="551.8"/><line x1="894" y1="556.0" x2="897" y2="556.0"/><line x1="894" y1="560.1" x2="897" y2="560.1"/><line x1="894" y1="564.3" x2="897" y2="564.3"/><line x1="894" y1="568.4" x2="897" y2="568.4"/><line x1="894" y1="572.6" x2="897" y2="572.6"/><line x1="894" y1="576.7" x2="897" y2="576.7"/><line x1="894" y1="580.9" x2="897" y2="580.9"/><line x1="894" y1="585.0" x2="897" y2="585.0"/><line x1="894" y1="589.2" x2="897" y2="589.2"/><line x1="894" y1="593.3" x2="897" y2="593.3"/><line x1="894" y1="597.5" x2="897" y2="597.5"/><line x1="894" y1="601.6" x2="897" y2="601.6"/><line x1="894" y1="605.8" x2="897" y2="605.8"/><line x1="894" y1="609.9" x2="897" y2="609.9"/><line x1="894" y1="614.1" x2="897" y2="614.1"/><line x1="894" y1="618.2" x2="897" y2="618.2"/><line x1="894" y1="622.4" x2="897" y2="622.4"/><line x1="894" y1="626.5" x2="897" y2="626.5"/><line x1="894" y1="630.7" x2="897" y2="630.7"/><line x1="894" y1="634.8" x2="897" y2="634.8"/><line x1="894" y1="639.0" x2="897" y2="639.0"/><line x1="894" y1="643.1" x2="897" y2="643.1"/><line x1="894" y1="647.3" x2="897" y2="647.3"/><line x1="894" y1="651.4" x2="897" y2="651.4"/><line x1="894" y1="655.6" x2="897" y2="655.6"/><line x1="894" y1="659.7" x2="897" y2="659.7"/><line x1="894" y1="663.9" x2="897" y2="663.9"/><line x1="894" y1="668.0" x2="897" y2="668.0"/><line x1="894" y1="672.2" x2="897" y2="672.2"/><line x1="894" y1="676.3" x2="897" y2="676.3"/><line x1="894" y1="680.5" x2="897" y2="680.5"/><line x1="894" y1="684.6" x2="897" y2="684.6"/><line x1="894" y1="688.8" x2="897" y2="688.8"/><line x1="894" y1="692.9" x2="897" y2="692.9"/><line x1="894" y1="697.1" x2="897" y2="697.1"/><line x1="894" y1="701.2" x2="897" y2="701.2"/><line x1="894" y1="705.4" x2="897" y2="705.4"/><line x1="894" y1="709.5" x2="897" y2="709.5"/><line x1="894" y1="713.7" x2="897" y2="713.7"/><line x1="894" y1="717.8" x2="897" y2="717.8"/><line x1="894" y1="722.0" x2="897" y2="722.0"/></g><g stroke="#b0b0b0" stroke-width="0.8"><line x1="909.5" y1="58" x2="909.5" y2="722" stroke-dasharray="1 1.6"/><line x1="909" y1="65.0" x2="912" y2="65.0"/><line x1="909" y1="73.4" x2="912" y2="73.4"/><line x1="909" y1="81.9" x2="912" y2="81.9"/><line x1="909" y1="90.1" x2="912" y2="90.1"/><line x1="909" y1="98.5" x2="912" y2="98.5"/><line x1="909" y1="106.7" x2="912" y2="106.7"/><line x1="909" y1="115.3" x2="912" y2="115.3"/><line x1="909" y1="123.8" x2="912" y2="123.8"/><line x1="909" y1="132.0" x2="912" y2="132.0"/><line x1="909" y1="140.4" x2="912" y2="140.4"/><line x1="909" y1="148.8" x2="912" y2="148.8"/><line x1="909" y1="157.0" x2="912" y2="157.0"/><line x1="909" y1="165.2" x2="912" y2="165.2"/><line x1="909" y1="174.0" x2="912" y2="174.0"/><line x1="909" y1="182.4" x2="912" y2="182.4"/><line x1="909" y1="193.7" x2="912" y2="193.7"/><line x1="909" y1="210.0" x2="912" y2="210.0"/><line x1="909" y1="226.3" x2="912" y2="226.3"/><line x1="909" y1="242.6" x2="912" y2="242.6"/><line x1="909" y1="260.0" x2="912" y2="260.0"/><line x1="909" y1="277.8" x2="912" y2="277.8"/><line x1="909" y1="293.4" x2="912" y2="293.4"/><line x1="909" y1="310.5" x2="912" y2="310.5"/><line x1="909" y1="327.2" x2="912" y2="327.2"/><line x1="909" y1="344.2" x2="912" y2="344.2"/><line x1="909" y1="360.5" x2="912" y2="360.5"/><line x1="909" y1="376.9" x2="912" y2="376.9"/><line x1="909" y1="391.4" x2="912" y2="391.4"/><line x1="909" y1="407.0" x2="912" y2="407.0"/><line x1="909" y1="422.2" x2="912" y2="422.2"/><line x1="909" y1="437.5" x2="912" y2="437.5"/><line x1="909" y1="452.5" x2="912" y2="452.5"/><line x1="909" y1="467.8" x2="912" y2="467.8"/><line x1="909" y1="482.5" x2="912" y2="482.5"/><line x1="909" y1="497.3" x2="912" y2="497.3"/><line x1="909" y1="512.7" x2="912" y2="512.7"/><line x1="909" y1="527.5" x2="912" y2="527.5"/><line x1="909" y1="543.0" x2="912" y2="543.0"/><line x1="909" y1="557.6" x2="912" y2="557.6"/><line x1="909" y1="573.0" x2="912" y2="573.0"/><line x1="909" y1="588.0" x2="912" y2="588.0"/><line x1="909" y1="603.0" x2="912" y2="603.0"/><line x1="909" y1="618.0" x2="912" y2="618.0"/><line x1="909" y1="633.0" x2="912" y2="633.0"/><line x1="909" y1="648.0" x2="912" y2="648.0"/><line x1="909" y1="663.7" x2="912" y2="663.7"/><line x1="909" y1="679.0" x2="912" y2="679.0"/><line x1="909" y1="694.0" x2="912" y2="694.0"/><line x1="909" y1="709.3" x2="912" y2="709.3"/></g><line x1="902" y1="56" x2="902" y2="724" stroke="#f26522" stroke-width="1.6"/><path d="M896.5,58.5 L902,53.5 L907.5,58.5Z" fill="#f26522"/><line x1="892" y1="57.8" x2="912" y2="57.8" stroke="#f26522" stroke-width="1"/><path d="M896.5,724 L902,729 L907.5,724Z" fill="#f26522"/><path d="M899,735.5 V741 H905 V735.5 Z" fill="#f26522"/><path d="M900.3,735.5 V733.5 Q902,731 903.7,733.5" fill="none" stroke="#f26522" stroke-width="1.2"/><rect x="900.5" y="737.5" width="3" height="1.8" fill="#fff"/><circle cx="930" cy="737" r="3.7" fill="none" stroke="#888" stroke-width="1.3" stroke-dasharray="1.4 0.9"/><circle cx="930" cy="737" r="2.2" fill="#f3a37a"/><circle cx="930" cy="737" r="1" fill="#fff"/></svg>
<div class="t " style="left:913.5px;top:62.2px;font-size:6.3px;color:#a8a8a8;font-weight:400;">98,00</div>
<div class="t " style="left:913.5px;top:70.6px;font-size:6.3px;color:#a8a8a8;font-weight:400;">96,00</div>
<div class="t " style="left:913.5px;top:79.1px;font-size:6.3px;color:#a8a8a8;font-weight:400;">94,00</div>
<div class="t " style="left:913.5px;top:87.3px;font-size:6.3px;color:#a8a8a8;font-weight:400;">92,00</div>
<div class="t " style="left:913.5px;top:95.7px;font-size:6.3px;color:#a8a8a8;font-weight:400;">90,00</div>
<div class="t " style="left:913.5px;top:103.9px;font-size:6.3px;color:#a8a8a8;font-weight:400;">88,00</div>
<div class="t " style="left:913.5px;top:112.5px;font-size:6.3px;color:#a8a8a8;font-weight:400;">86,00</div>
<div class="t " style="left:913.5px;top:121.0px;font-size:6.3px;color:#a8a8a8;font-weight:400;">84,00</div>
<div class="t " style="left:913.5px;top:129.2px;font-size:6.3px;color:#a8a8a8;font-weight:400;">82,00</div>
<div class="t " style="left:913.5px;top:137.6px;font-size:6.3px;color:#a8a8a8;font-weight:400;">80,00</div>
<div class="t " style="left:913.5px;top:146.0px;font-size:6.3px;color:#a8a8a8;font-weight:400;">78,00</div>
<div class="t " style="left:913.5px;top:154.2px;font-size:6.3px;color:#a8a8a8;font-weight:400;">76,00</div>
<div class="t " style="left:913.5px;top:162.4px;font-size:6.3px;color:#a8a8a8;font-weight:400;">74,00</div>
<div class="t " style="left:913.5px;top:171.2px;font-size:6.3px;color:#a8a8a8;font-weight:400;">72,00</div>
<div class="t " style="left:913.5px;top:179.6px;font-size:6.3px;color:#a8a8a8;font-weight:400;">70,00</div>
<div class="t " style="left:913.5px;top:190.9px;font-size:6.3px;color:#a8a8a8;font-weight:400;">68,00</div>
<div class="t " style="left:913.5px;top:207.2px;font-size:6.3px;color:#a8a8a8;font-weight:400;">66,00</div>
<div class="t " style="left:913.5px;top:223.5px;font-size:6.3px;color:#a8a8a8;font-weight:400;">64,00</div>
<div class="t " style="left:913.5px;top:239.8px;font-size:6.3px;color:#a8a8a8;font-weight:400;">62,00</div>
<div class="t " style="left:913.5px;top:257.2px;font-size:6.3px;color:#a8a8a8;font-weight:400;">60,00</div>
<div class="t " style="left:913.5px;top:275.0px;font-size:6.3px;color:#a8a8a8;font-weight:400;">58,00</div>
<div class="t " style="left:913.5px;top:290.6px;font-size:6.3px;color:#a8a8a8;font-weight:400;">56,00</div>
<div class="t " style="left:913.5px;top:307.7px;font-size:6.3px;color:#a8a8a8;font-weight:400;">54,00</div>
<div class="t " style="left:913.5px;top:324.4px;font-size:6.3px;color:#a8a8a8;font-weight:400;">52,00</div>
<div class="t " style="left:913.5px;top:341.4px;font-size:6.3px;color:#a8a8a8;font-weight:400;">50,00</div>
<div class="t " style="left:913.5px;top:357.7px;font-size:6.3px;color:#a8a8a8;font-weight:400;">48,00</div>
<div class="t " style="left:913.5px;top:374.1px;font-size:6.3px;color:#a8a8a8;font-weight:400;">46,00</div>
<div class="t " style="left:913.5px;top:388.6px;font-size:6.3px;color:#a8a8a8;font-weight:400;">44,00</div>
<div class="t " style="left:913.5px;top:404.2px;font-size:6.3px;color:#a8a8a8;font-weight:400;">42,00</div>
<div class="t " style="left:913.5px;top:419.4px;font-size:6.3px;color:#a8a8a8;font-weight:400;">40,00</div>
<div class="t " style="left:913.5px;top:434.7px;font-size:6.3px;color:#a8a8a8;font-weight:400;">38,00</div>
<div class="t " style="left:913.5px;top:449.7px;font-size:6.3px;color:#a8a8a8;font-weight:400;">36,00</div>
<div class="t " style="left:913.5px;top:465.0px;font-size:6.3px;color:#a8a8a8;font-weight:400;">34,00</div>
<div class="t " style="left:913.5px;top:479.7px;font-size:6.3px;color:#a8a8a8;font-weight:400;">32,00</div>
<div class="t " style="left:913.5px;top:494.5px;font-size:6.3px;color:#a8a8a8;font-weight:400;">30,00</div>
<div class="t " style="left:913.5px;top:509.9px;font-size:6.3px;color:#a8a8a8;font-weight:400;">28,00</div>
<div class="t " style="left:913.5px;top:524.7px;font-size:6.3px;color:#a8a8a8;font-weight:400;">26,00</div>
<div class="t " style="left:913.5px;top:540.2px;font-size:6.3px;color:#a8a8a8;font-weight:400;">24,00</div>
<div class="t " style="left:913.5px;top:554.8px;font-size:6.3px;color:#a8a8a8;font-weight:400;">22,00</div>
<div class="t " style="left:913.5px;top:570.2px;font-size:6.3px;color:#a8a8a8;font-weight:400;">20,00</div>
<div class="t " style="left:913.5px;top:585.2px;font-size:6.3px;color:#a8a8a8;font-weight:400;">18,00</div>
<div class="t " style="left:913.5px;top:600.2px;font-size:6.3px;color:#a8a8a8;font-weight:400;">16,00</div>
<div class="t " style="left:913.5px;top:615.2px;font-size:6.3px;color:#a8a8a8;font-weight:400;">14,00</div>
<div class="t " style="left:913.5px;top:630.2px;font-size:6.3px;color:#a8a8a8;font-weight:400;">12,00</div>
<div class="t " style="left:913.5px;top:645.2px;font-size:6.3px;color:#a8a8a8;font-weight:400;">10,00</div>
<div class="t " style="left:913.5px;top:660.9px;font-size:6.3px;color:#a8a8a8;font-weight:400;">8,00</div>
<div class="t " style="left:913.5px;top:676.2px;font-size:6.3px;color:#a8a8a8;font-weight:400;">6,00</div>
<div class="t " style="left:913.5px;top:691.2px;font-size:6.3px;color:#a8a8a8;font-weight:400;">4,00</div>
<div class="t " style="left:913.5px;top:706.5px;font-size:6.3px;color:#a8a8a8;font-weight:400;">2,00</div>
<div class="t " style="left:913.5px;top:54.8px;font-size:6.3px;color:#a8a8a8;font-weight:400;">100,00</div>
<svg style="left:914px;top:52px" width="11" height="11"><circle cx="5.5" cy="5.6" r="4" fill="#f26522"/><path d="M5.5,3.3 V7.9 M3.2,5.6 H7.8" stroke="#fff" stroke-width="1.3"/></svg>
<div class="t " style="left:913px;top:715.6px;font-size:7.3px;color:#111;font-weight:400;">0,20</div>
<div class="t " style="left:913px;top:725.6px;font-size:7.3px;color:#111;font-weight:400;">(1)</div>
<div class="t " style="left:939.7px;top:50.3px;font-size:7.3px;color:#111;font-weight:400;">Nastavení tisku :</div>
<div class="b" style="left:940px;top:59.5px;width:245.5px;height:14.5px;background:#fff;border:1px solid #a6a6a6;border-radius:1px"></div><div class="t " style="left:973.6px;top:63.4px;font-size:7.3px;color:#111;font-weight:400;">0.20mm QUALITY (upraveno)</div><svg style="left:1176.5px;top:64.75px" width="7" height="5"><path d="M0.8,1 L3.5,3.6 L6.2,1" fill="none" stroke="#555" stroke-width="0.9"/></svg>
<svg style="left:946.5px;top:62px" width="10" height="10"><circle cx="5" cy="5" r="3.85" fill="none" stroke="#808080" stroke-width="1.1" stroke-dasharray="1.4 1.62"/><circle cx="5" cy="5" r="3.2" fill="#f4b592" stroke="#808080" stroke-width="0.8"/><circle cx="5" cy="5" r="1.3" fill="#fff"/></svg>
<svg style="left:961px;top:62px" width="8" height="10"><rect x="0.4" y="4.4" width="7.2" height="5.3" rx="0.9" fill="#6e6e6e"/><path d="M1.9,4.8 V3.2 Q4,-0.2 6.1,3.2 V4.8" fill="none" stroke="#6e6e6e" stroke-width="1.3"/><rect x="1.8" y="6" width="4.4" height="2" fill="#fff"/></svg>
<svg style="left:1187.5px;top:61.3px" width="10" height="10"><circle cx="5" cy="5" r="3.85" fill="none" stroke="#808080" stroke-width="1.1" stroke-dasharray="1.4 1.62"/><circle cx="5" cy="5" r="3.2" fill="#f4b592" stroke="#808080" stroke-width="0.8"/><circle cx="5" cy="5" r="1.3" fill="#fff"/></svg>
<div class="t " style="left:939.7px;top:77.6px;font-size:7.3px;color:#111;font-weight:400;">Filament :</div>
<div class="b" style="left:940px;top:86.4px;width:245.5px;height:14.5px;background:#fff;border:1px solid #a6a6a6;border-radius:1px"></div><div class="t " style="left:973.6px;top:90.3px;font-size:7.3px;color:#111;font-weight:400;">Prusament PLA</div><svg style="left:1176.5px;top:91.65px" width="7" height="5"><path d="M0.8,1 L3.5,3.6 L6.2,1" fill="none" stroke="#555" stroke-width="0.9"/></svg>
<div class="b" style="left:944.3px;top:89.4px;width:14.5px;height:9px;background:#ff7f00;border:1px solid #c06010;"></div>
<svg style="left:961px;top:88.7px" width="8" height="10"><rect x="0.4" y="4.4" width="7.2" height="5.3" rx="0.9" fill="#6e6e6e"/><path d="M1.9,4.8 V3.2 Q4,-0.2 6.1,3.2 V4.8" fill="none" stroke="#6e6e6e" stroke-width="1.3"/><rect x="1.8" y="6" width="4.4" height="2" fill="#fff"/></svg>
<svg style="left:1187.5px;top:88.3px" width="10" height="10"><circle cx="5" cy="5" r="3.85" fill="none" stroke="#808080" stroke-width="1.1" stroke-dasharray="1.4 1.62"/><circle cx="5" cy="5" r="3.2" fill="#f4b592" stroke="#808080" stroke-width="0.8"/><circle cx="5" cy="5" r="1.3" fill="#fff"/></svg>
<div class="t " style="left:939.7px;top:104.1px;font-size:7.3px;color:#111;font-weight:400;">Tiskárna :</div>
<div class="b" style="left:940px;top:113.5px;width:245.5px;height:14.5px;background:#fff;border:1px solid #a6a6a6;border-radius:1px"></div><div class="t " style="left:973.6px;top:117.4px;font-size:7.3px;color:#111;font-weight:400;">Original Prusa i3 MK3S &amp; MK3S+</div><svg style="left:1176.5px;top:118.75px" width="7" height="5"><path d="M0.8,1 L3.5,3.6 L6.2,1" fill="none" stroke="#555" stroke-width="0.9"/></svg>
<svg style="left:946px;top:116px" width="10" height="9"><rect x="0.5" y="0.5" width="8" height="8" fill="#fff" stroke="#777"/><rect x="2" y="2.5" width="1.8" height="1.8" fill="#e33"/><line x1="0.5" y1="4" x2="8.5" y2="4" stroke="#999" stroke-width="0.6"/></svg>
<svg style="left:961px;top:115.8px" width="8" height="10"><rect x="0.4" y="4.4" width="7.2" height="5.3" rx="0.9" fill="#6e6e6e"/><path d="M1.9,4.8 V3.2 Q4,-0.2 6.1,3.2 V4.8" fill="none" stroke="#6e6e6e" stroke-width="1.3"/><rect x="1.8" y="6" width="4.4" height="2" fill="#fff"/></svg>
<svg style="left:1187.5px;top:115.3px" width="10" height="10"><circle cx="5" cy="5" r="3.85" fill="none" stroke="#808080" stroke-width="1.1" stroke-dasharray="1.4 1.62"/><circle cx="5" cy="5" r="3.2" fill="#f4b592" stroke="#808080" stroke-width="0.8"/><circle cx="5" cy="5" r="1.3" fill="#fff"/></svg>
<div class="t " style="left:940.8px;top:137.3px;font-size:7.3px;color:#111;font-weight:400;">Podpěry:</div>
<div class="b" style="left:971.6px;top:133px;width:214px;height:15.2px;background:#fff;border:1px solid #a6a6a6;border-radius:1px"></div><div class="t " style="left:974.5px;top:137.2px;font-size:7.3px;color:#111;font-weight:400;">Všude</div><svg style="left:1176.6px;top:138.6px" width="7" height="5"><path d="M0.8,1 L3.5,3.6 L6.2,1" fill="none" stroke="#555" stroke-width="0.9"/></svg>
<div class="t " style="left:940.8px;top:154.2px;font-size:7.3px;color:#111;font-weight:400;">Výplň:</div>
<div class="b" style="left:963px;top:150.4px;width:49.6px;height:15.1px;background:#fff;border:1px solid #a6a6a6;border-radius:1px"></div><div class="t " style="left:967px;top:154.6px;font-size:7.3px;color:#111;font-weight:400;">15%</div><svg style="left:1003.6px;top:155.95000000000002px" width="7" height="5"><path d="M0.8,1 L3.5,3.6 L6.2,1" fill="none" stroke="#555" stroke-width="0.9"/></svg>
<div class="t " style="left:1025px;top:154.2px;font-size:7.3px;color:#111;font-weight:400;">Límec:</div>
<div class="b" style="left:1048.5px;top:154px;width:8.5px;height:8.5px;background:#fff;border:1px solid #333;"></div>
<div class="b" style="left:939.7px;top:170px;width:260px;height:276px;background:#fff;border:1px solid #a0a0a0;"></div>
<div class="b" style="left:1065.5px;top:171px;width:1px;height:14px;background:#e8e8e8;"></div>
<div class="b" style="left:1083.5px;top:171px;width:1px;height:14px;background:#e8e8e8;"></div>
<div class="t " style="left:944px;top:174.3px;font-size:7.3px;color:#111;font-weight:400;">Název</div>
<div class="t " style="left:1129px;top:174.3px;font-size:7.3px;color:#111;font-weight:400;">Editace</div>
<div class="b" style="left:941px;top:185px;width:258px;height:14px;background:#d9d9d9;"></div>
<div class="t " style="left:952.5px;top:188.6px;font-size:7.3px;color:#111;font-weight:400;">Test.stl</div>
<svg style="left:1069px;top:188px" width="12" height="8"><path d="M1,4 Q6,-0.5 11,4 Q6,8.5 1,4Z" fill="none" stroke="#555" stroke-width="0.9"/><circle cx="6" cy="4" r="1.5" fill="#555"/></svg>
<svg style="left:1136px;top:186px" width="11" height="11"><rect x="1" y="3" width="6.5" height="7" rx="1" fill="#fff" stroke="#777" stroke-width="0.9"/><circle cx="8" cy="3" r="2.3" fill="#f26522"/><circle cx="8" cy="3" r="0.9" fill="#fff"/></svg>
<div class="b" style="left:940px;top:454px;width:259px;height:106px;background:none;border:1px solid #dcdcdc;"></div>
<div class="b" style="left:945px;top:450px;width:87px;height:8px;background:#fff;"></div>
<div class="t " style="left:947.6px;top:450.9px;font-size:7.3px;color:#111;font-weight:700;">Manipulace s objektem</div>
<div class="b" style="left:945.3px;top:462.6px;width:94px;height:15.1px;background:#fff;border:1px solid #a6a6a6;border-radius:1px"></div><div class="t " style="left:948px;top:466.8px;font-size:7.3px;color:#111;font-weight:400;">Světové souřadnice</div><svg style="left:1030.3px;top:468.15000000000003px" width="7" height="5"><path d="M0.8,1 L3.5,3.6 L6.2,1" fill="none" stroke="#555" stroke-width="0.9"/></svg>
<div class="t " style="left:1050.5px;top:466.0px;font-size:7.3px;color:#111;font-weight:700;">X</div>
<div class="t " style="left:1089.8px;top:466.0px;font-size:7.3px;color:#111;font-weight:700;">Y</div>
<div class="t " style="left:1129.5px;top:466.0px;font-size:7.3px;color:#111;font-weight:700;">Z</div>
<div class="t " style="left:945px;top:482.5px;font-size:7.3px;color:#111;font-weight:400;">Pozice:</div>
<div class="b" style="left:1041px;top:478.4px;width:37.5px;height:14px;background:#fff;border:1px solid #8a8a8a;"></div>
<div class="t " style="left:1043.5px;top:481.5px;font-size:7.3px;color:#111;font-weight:400;">125</div>
<div class="b" style="left:1080.5px;top:478.4px;width:37.5px;height:14px;background:#fff;border:1px solid #8a8a8a;"></div>
<div class="t " style="left:1083.0px;top:481.5px;font-size:7.3px;color:#111;font-weight:400;">105</div>
<div class="b" style="left:1120px;top:478.4px;width:37.5px;height:14px;background:#fff;border:1px solid #8a8a8a;"></div>
<div class="t " style="left:1122.5px;top:481.5px;font-size:7.3px;color:#111;font-weight:400;">50</div>
<div class="t " style="left:1159.5px;top:482.5px;font-size:7.3px;color:#111;font-weight:400;">mm</div>
<div class="t " style="left:945px;top:499.1px;font-size:7.3px;color:#111;font-weight:400;">Otočit:</div>
<div class="b" style="left:1041px;top:495px;width:37.5px;height:14px;background:#fff;border:1px solid #8a8a8a;"></div>
<div class="t " style="left:1043.5px;top:498.1px;font-size:7.3px;color:#111;font-weight:400;">0</div>
<div class="b" style="left:1080.5px;top:495px;width:37.5px;height:14px;background:#fff;border:1px solid #8a8a8a;"></div>
<div class="t " style="left:1083.0px;top:498.1px;font-size:7.3px;color:#111;font-weight:400;">0</div>
<div class="b" style="left:1120px;top:495px;width:37.5px;height:14px;background:#fff;border:1px solid #8a8a8a;"></div>
<div class="t " style="left:1122.5px;top:498.1px;font-size:7.3px;color:#111;font-weight:400;">0</div>
<div class="t " style="left:1159.5px;top:499.1px;font-size:7.3px;color:#111;font-weight:400;">°</div>
<div class="t " style="left:958px;top:515.6px;font-size:7.3px;color:#111;font-weight:400;">Měřítka:</div>
<div class="b" style="left:1041px;top:511.5px;width:37.5px;height:14px;background:#fff;border:1px solid #8a8a8a;"></div>
<div class="t " style="left:1043.5px;top:514.6px;font-size:7.3px;color:#111;font-weight:400;">3494,68</div>
<div class="b" style="left:1080.5px;top:511.5px;width:37.5px;height:14px;background:#fff;border:1px solid #8a8a8a;"></div>
<div class="t " style="left:1083.0px;top:514.6px;font-size:7.3px;color:#111;font-weight:400;">3494,68</div>
<div class="b" style="left:1120px;top:511.5px;width:37.5px;height:14px;background:#fff;border:1px solid #8a8a8a;"></div>
<div class="t " style="left:1122.5px;top:514.6px;font-size:7.3px;color:#111;font-weight:400;">3494,68</div>
<div class="t " style="left:1159.5px;top:515.6px;font-size:7.3px;color:#111;font-weight:400;">%</div>
<div class="t " style="left:958px;top:531.7px;font-size:7.3px;color:#111;font-weight:400;">Rozměr:</div>
<div class="b" style="left:1041px;top:527.6px;width:37.5px;height:14px;background:#fff;border:1px solid #8a8a8a;"></div>
<div class="t " style="left:1043.5px;top:530.7px;font-size:7.3px;color:#111;font-weight:400;">24,02</div>
<div class="b" style="left:1080.5px;top:527.6px;width:37.5px;height:14px;background:#fff;border:1px solid #8a8a8a;"></div>
<div class="t " style="left:1083.0px;top:530.7px;font-size:7.3px;color:#111;font-weight:400;">58,92</div>
<div class="b" style="left:1120px;top:527.6px;width:37.5px;height:14px;background:#fff;border:1px solid #8a8a8a;"></div>
<div class="t " style="left:1122.5px;top:530.7px;font-size:7.3px;color:#111;font-weight:400;">100</div>
<div class="t " style="left:1159.5px;top:531.7px;font-size:7.3px;color:#111;font-weight:400;">mm</div>
<svg style="left:941.5px;top:522px" width="8" height="10"><rect x="0.4" y="4.4" width="7.2" height="5.3" rx="0.9" fill="#666"/><path d="M1.9,4.8 V3.2 Q4,-0.2 6.1,3.2 V4.8" fill="none" stroke="#666" stroke-width="1.3"/><rect x="1.8" y="6" width="4.4" height="2" fill="#fff"/></svg>
<svg style="left:1173px;top:480px" width="12" height="10"><path d="M1,8.5 H10" stroke="#f26522" stroke-width="1.2"/><rect x="2.5" y="2.5" width="5" height="4.5" fill="none" stroke="#777" stroke-width="0.8"/><path d="M8,3.5 V0.5 M6.5,2 H9.5" stroke="#444" stroke-width="0.8"/></svg>
<svg style="left:1174px;top:512px" width="11" height="11"><path d="M3,3.2 A3.8,3.8 0 1 1 2.4,7.5" fill="none" stroke="#f26522" stroke-width="1.5"/><path d="M1,1.2 L4.6,1.5 L3.2,5Z" fill="#f26522"/></svg>
<div class="b" style="left:945px;top:546px;width:8.5px;height:8.5px;background:#fff;border:1px solid #333;"></div>
<div class="t " style="left:955px;top:546.9px;font-size:7.3px;color:#111;font-weight:400;">Palce</div>
<div class="b" style="left:940px;top:567.5px;width:259px;height:43.5px;background:none;border:1px solid #dcdcdc;"></div>
<div class="b" style="left:944px;top:562px;width:18px;height:9px;background:#fff;"></div>
<div class="t " style="left:945.7px;top:564.3px;font-size:7.3px;color:#111;font-weight:700;">Info</div>
<div class="t " style="left:943px;top:575.2px;font-size:7.3px;color:#111;font-weight:400;">Rozměr:</div>
<div class="t " style="left:979px;top:575.2px;font-size:7.3px;color:#111;font-weight:400;">0,69 x 1,69 x 2,86</div>
<div class="t " style="left:1043px;top:575.2px;font-size:7.3px;color:#111;font-weight:400;">Objem:</div>
<div class="t " style="left:1076px;top:575.2px;font-size:7.3px;color:#111;font-weight:400;">0,41</div>
<div class="t " style="left:943px;top:588.4px;font-size:7.3px;color:#111;font-weight:400;">Facety:</div>
<div class="t " style="left:979px;top:588.4px;font-size:7.3px;color:#111;font-weight:400;">14336 (1 stěna)</div>
<div class="t " style="left:944px;top:600.6px;font-size:7.3px;color:#111;font-weight:400;">Nebyly zjištěny žádné chyby</div>
<div class="b" style="left:940px;top:620.5px;width:259px;height:98.5px;background:none;border:1px solid #dcdcdc;"></div>
<div class="b" style="left:944px;top:615px;width:76px;height:9px;background:#fff;"></div>
<div class="t " style="left:945.7px;top:617.1px;font-size:7.3px;color:#111;font-weight:700;">Informace o slicování</div>
<div class="t " style="left:943px;top:627.8px;font-size:7.3px;color:#111;font-weight:400;">Použito Filamentu (m)</div>
<div class="t " style="left:1035px;top:627.8px;font-size:7.3px;color:#111;font-weight:400;">3,82</div>
<div class="t " style="left:943px;top:641.1px;font-size:7.3px;color:#111;font-weight:400;">Použito Filamentu (mm³)</div>
<div class="t " style="left:1035px;top:641.1px;font-size:7.3px;color:#111;font-weight:400;">9197,74</div>
<div class="t " style="left:943px;top:654.2px;font-size:7.3px;color:#111;font-weight:400;">Použito Filamentu (g)</div>
<div class="t " style="left:1035px;top:654.2px;font-size:7.3px;color:#111;font-weight:400;">11,41 (212,41)</div>
<div class="t " style="left:943px;top:676.6px;font-size:7.3px;color:#111;font-weight:400;">Náklady</div>
<div class="t " style="left:1035px;top:676.6px;font-size:7.3px;color:#111;font-weight:400;">0,34</div>
<div class="t " style="left:943px;top:698.8px;font-size:7.3px;color:#111;font-weight:400;">&nbsp;- normální režim</div>
<div class="t " style="left:1035px;top:698.8px;font-size:7.3px;color:#111;font-weight:400;">2h10m</div>
<div class="t " style="left:943px;top:708.6px;font-size:7.3px;color:#111;font-weight:400;">&nbsp;- tichý režim</div>
<div class="t " style="left:1035px;top:708.6px;font-size:7.3px;color:#111;font-weight:400;">2h11m</div>
<div class="t " style="left:954px;top:663.3px;font-size:7.3px;color:#111;font-weight:400;">(včetné cívky)</div>
<div class="t " style="left:943px;top:690.1px;font-size:7.3px;color:#111;font-weight:400;">Odhadovaný čas tisku:</div>
<div class="b" style="left:940px;top:724px;width:259px;height:19px;background:#e1e1e1;"></div>
<div class="t" style="left:940px;width:259px;text-align:center;top:729.1px;font-size:7.3px;color:#111;font-weight:700">Exportovat G-code</div>
<div class="b" style="left:1px;top:712px;width:866px;height:31px;background:#fff;"></div>
<div class="t " style="left:4px;top:724.1px;font-size:7.3px;color:#111;font-weight:400;">Zobrazení</div>
<div class="b" style="left:39.2px;top:720px;width:67.5px;height:15px;background:#fff;border:1px solid #a6a6a6;border-radius:1px"></div><div class="t " style="left:42px;top:724.1px;font-size:7.3px;color:#111;font-weight:400;">Typ</div><svg style="left:97.7px;top:725.5px" width="7" height="5"><path d="M0.8,1 L3.5,3.6 L6.2,1" fill="none" stroke="#555" stroke-width="0.9"/></svg>
<div class="t " style="left:113px;top:724.1px;font-size:7.3px;color:#111;font-weight:400;">Zobrazit</div>
<div class="b" style="left:143.5px;top:720px;width:146px;height:15px;background:#f0f0f0;border:1px solid #a6a6a6;border-radius:1px"></div><div class="t " style="left:146px;top:724.1px;font-size:7.3px;color:#111;font-weight:400;">Volby</div><svg style="left:280.5px;top:725.5px" width="7" height="5"><path d="M0.8,1 L3.5,3.6 L6.2,1" fill="none" stroke="#555" stroke-width="0.9"/></svg>
<svg style="left:294px;top:720px" width="575" height="24" viewBox="294 720 575 24"><line x1="300" y1="727.5" x2="860" y2="727.5" stroke="#f26522" stroke-width="1.4"/><path d="M298,727.5 L303.5,723.5 L303.5,731.5Z" fill="#f26522"/><path d="M864,727.5 L858.5,723.5 L858.5,731.5Z" fill="#f26522"/></svg>
<div class="t " style="left:303px;top:734.6px;font-size:7.3px;color:#111;font-weight:400;">157045</div>
<div class="t " style="left:836px;top:714.1px;font-size:7.3px;color:#111;font-weight:400;">157240</div>
</body></html>
